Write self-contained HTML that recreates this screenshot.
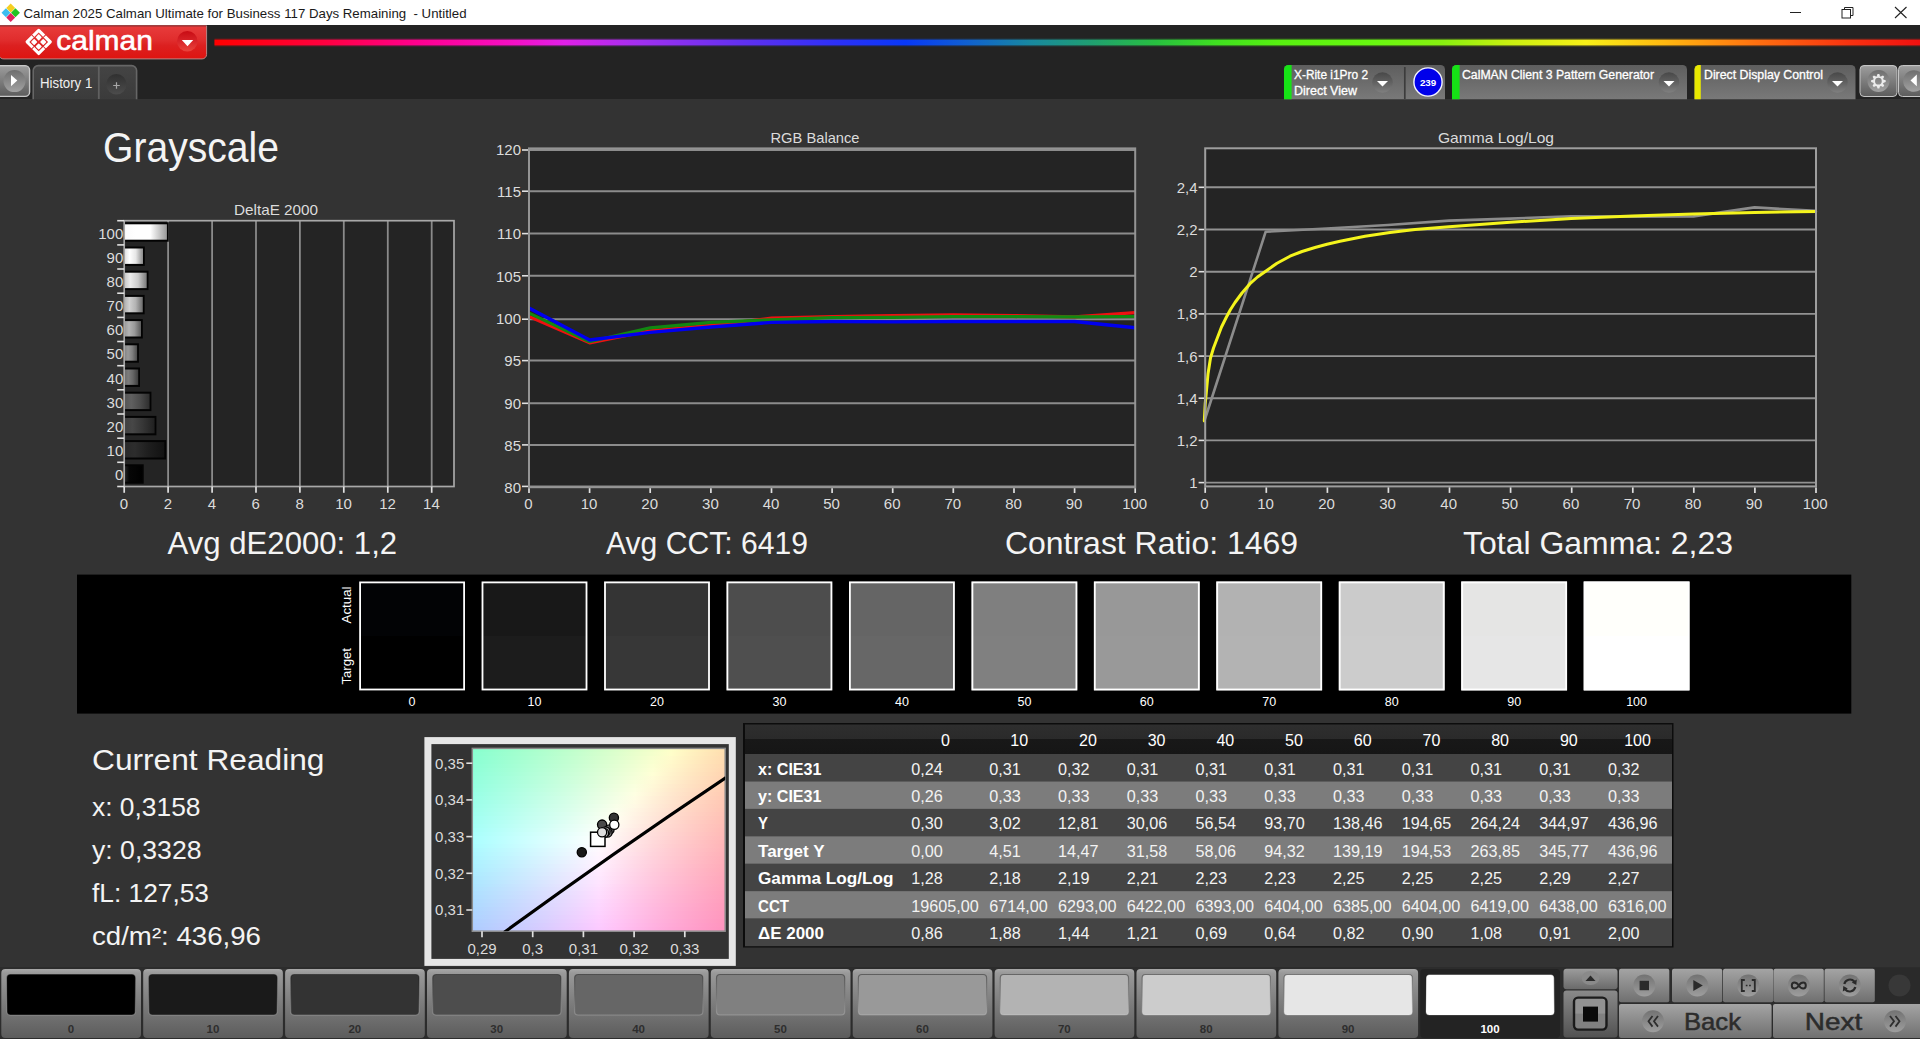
<!DOCTYPE html>
<html lang="en"><head><meta charset="utf-8"><title>Calman 2025 Calman Ultimate for Business - Untitled</title>
<style>
html,body{margin:0;padding:0;background:#333;overflow:hidden;}
body{width:1920px;height:1039px;font-family:"Liberation Sans",sans-serif;}
svg{display:block;font-family:"Liberation Sans",sans-serif;}
</style></head><body>
<svg width="1920" height="1039" viewBox="0 0 1920 1039">
<defs>
<linearGradient id="rainbow" x1="0" x2="1" y1="0" y2="0">
<stop offset="0" stop-color="#ff0000"/><stop offset="0.065" stop-color="#ff0040"/><stop offset="0.12" stop-color="#ff0090"/>
<stop offset="0.175" stop-color="#f410c4"/><stop offset="0.205" stop-color="#e020e8"/><stop offset="0.25" stop-color="#a030f0"/>
<stop offset="0.31" stop-color="#6030f0"/><stop offset="0.365" stop-color="#2c30f8"/><stop offset="0.405" stop-color="#0838f8"/>
<stop offset="0.441" stop-color="#1060d0"/><stop offset="0.478" stop-color="#1888a0"/><stop offset="0.515" stop-color="#20a070"/>
<stop offset="0.552" stop-color="#28c040"/><stop offset="0.588" stop-color="#40e020"/><stop offset="0.625" stop-color="#58f010"/>
<stop offset="0.68" stop-color="#68f810"/><stop offset="0.72" stop-color="#88f010"/><stop offset="0.758" stop-color="#c8f010"/>
<stop offset="0.804" stop-color="#f8f018"/><stop offset="0.85" stop-color="#ffb810"/><stop offset="0.904" stop-color="#ff7010"/>
<stop offset="0.96" stop-color="#f83010"/><stop offset="1" stop-color="#f01010"/>
</linearGradient>
<linearGradient id="redbtn" x1="0" x2="0" y1="0" y2="1">
<stop offset="0" stop-color="#e83c3c"/><stop offset="0.45" stop-color="#e02c2c"/><stop offset="0.6" stop-color="#dc2020"/><stop offset="1" stop-color="#de1410"/>
</linearGradient>
<linearGradient id="redcirc" x1="0" x2="0" y1="0" y2="1">
<stop offset="0" stop-color="#c80c14"/><stop offset="0.5" stop-color="#d82428"/><stop offset="1" stop-color="#ea443c"/>
</linearGradient>
<linearGradient id="panel" x1="0" x2="0" y1="0" y2="1">
<stop offset="0" stop-color="#5e5e5e"/><stop offset="1" stop-color="#797979"/>
</linearGradient>
<linearGradient id="tab" x1="0" x2="0" y1="0" y2="1">
<stop offset="0" stop-color="#444"/><stop offset="1" stop-color="#3b3b3b"/>
</linearGradient>
<linearGradient id="pluscirc" x1="0" x2="0" y1="0" y2="1"><stop offset="0" stop-color="#303030"/><stop offset="1" stop-color="#4c4c4c"/></linearGradient>
<linearGradient id="dcirc" x1="0" x2="0" y1="0" y2="1">
<stop offset="0" stop-color="#484848"/><stop offset="0.55" stop-color="#646464"/><stop offset="1" stop-color="#808080"/>
</linearGradient>
<linearGradient id="gbtn" x1="0" x2="0" y1="0" y2="1">
<stop offset="0" stop-color="#a8a8a8"/><stop offset="0.06" stop-color="#999"/><stop offset="1" stop-color="#5c5c5c"/>
</linearGradient>
<linearGradient id="gbtn2" x1="0" x2="0" y1="0" y2="1">
<stop offset="0" stop-color="#9c9c9c"/><stop offset="1" stop-color="#6a6a6a"/>
</linearGradient>
<linearGradient id="gbtn3" x1="0" x2="0" y1="0" y2="1">
<stop offset="0" stop-color="#a4a4a4"/><stop offset="1" stop-color="#707070"/>
</linearGradient>
<linearGradient id="gcirc" x1="0" x2="0" y1="0" y2="1">
<stop offset="0" stop-color="#6e6e6e"/><stop offset="1" stop-color="#a2a2a2"/>
</linearGradient>
<linearGradient id="sqbtn" x1="0" x2="0" y1="0" y2="1">
<stop offset="0" stop-color="#8a8a8a"/><stop offset="1" stop-color="#525252"/>
</linearGradient>
<linearGradient id="inset" x1="0" x2="0" y1="0" y2="1"><stop offset="0" stop-color="#000" stop-opacity="0.38"/><stop offset="0.5" stop-color="#444" stop-opacity="0.25"/><stop offset="1" stop-color="#fff" stop-opacity="0.22"/></linearGradient>
<linearGradient id="thead" x1="0" x2="0" y1="0" y2="1">
<stop offset="0" stop-color="#2e2e2e"/><stop offset="0.5" stop-color="#2a2a2a"/><stop offset="0.5" stop-color="#181818"/><stop offset="1" stop-color="#161616"/>
</linearGradient>
<linearGradient id="bar0" x1="0" x2="1" y1="0" y2="0"><stop offset="0" stop-color="#fbfbfb"/><stop offset="0.25" stop-color="#ffffff"/><stop offset="0.6" stop-color="#ffffff"/><stop offset="1" stop-color="#999999"/></linearGradient><linearGradient id="bar1" x1="0" x2="1" y1="0" y2="0"><stop offset="0" stop-color="#e3e3e3"/><stop offset="0.25" stop-color="#ffffff"/><stop offset="0.6" stop-color="#e6e6e6"/><stop offset="1" stop-color="#8a8a8a"/></linearGradient><linearGradient id="bar2" x1="0" x2="1" y1="0" y2="0"><stop offset="0" stop-color="#cbcbcb"/><stop offset="0.25" stop-color="#ececec"/><stop offset="0.6" stop-color="#cccccc"/><stop offset="1" stop-color="#7a7a7a"/></linearGradient><linearGradient id="bar3" x1="0" x2="1" y1="0" y2="0"><stop offset="0" stop-color="#b4b4b4"/><stop offset="0.25" stop-color="#d0d0d0"/><stop offset="0.6" stop-color="#b3b3b3"/><stop offset="1" stop-color="#6b6b6b"/></linearGradient><linearGradient id="bar4" x1="0" x2="1" y1="0" y2="0"><stop offset="0" stop-color="#9c9c9c"/><stop offset="0.25" stop-color="#b4b4b4"/><stop offset="0.6" stop-color="#999999"/><stop offset="1" stop-color="#5b5b5b"/></linearGradient><linearGradient id="bar5" x1="0" x2="1" y1="0" y2="0"><stop offset="0" stop-color="#858585"/><stop offset="0.25" stop-color="#989898"/><stop offset="0.6" stop-color="#808080"/><stop offset="1" stop-color="#4c4c4c"/></linearGradient><linearGradient id="bar6" x1="0" x2="1" y1="0" y2="0"><stop offset="0" stop-color="#6c6c6c"/><stop offset="0.25" stop-color="#7c7c7c"/><stop offset="0.6" stop-color="#666666"/><stop offset="1" stop-color="#3d3d3d"/></linearGradient><linearGradient id="bar7" x1="0" x2="1" y1="0" y2="0"><stop offset="0" stop-color="#555555"/><stop offset="0.25" stop-color="#606060"/><stop offset="0.6" stop-color="#4d4d4d"/><stop offset="1" stop-color="#2e2e2e"/></linearGradient><linearGradient id="bar8" x1="0" x2="1" y1="0" y2="0"><stop offset="0" stop-color="#404040"/><stop offset="0.25" stop-color="#474747"/><stop offset="0.6" stop-color="#363636"/><stop offset="1" stop-color="#202020"/></linearGradient><linearGradient id="bar9" x1="0" x2="1" y1="0" y2="0"><stop offset="0" stop-color="#292929"/><stop offset="0.25" stop-color="#2d2d2d"/><stop offset="0.6" stop-color="#1e1e1e"/><stop offset="1" stop-color="#121212"/></linearGradient><linearGradient id="bar10" x1="0" x2="1" y1="0" y2="0"><stop offset="0" stop-color="#222222"/><stop offset="0.25" stop-color="#060606"/><stop offset="0.6" stop-color="#040404"/><stop offset="1" stop-color="#000000"/></linearGradient><linearGradient id="c0" x1="0" x2="1" y1="0" y2="0"><stop offset="0.000" stop-color="#87ffce"/><stop offset="0.071" stop-color="#91ffce"/><stop offset="0.143" stop-color="#9bffce"/><stop offset="0.214" stop-color="#a5ffcd"/><stop offset="0.286" stop-color="#b0ffcd"/><stop offset="0.357" stop-color="#baffcc"/><stop offset="0.429" stop-color="#c5ffcc"/><stop offset="0.500" stop-color="#d0ffcb"/><stop offset="0.571" stop-color="#dbffcb"/><stop offset="0.643" stop-color="#e7ffca"/><stop offset="0.714" stop-color="#f2ffca"/><stop offset="0.786" stop-color="#feffc9"/><stop offset="0.857" stop-color="#fff4c0"/><stop offset="0.929" stop-color="#ffe9b7"/><stop offset="1.000" stop-color="#ffdfaf"/></linearGradient><linearGradient id="c1" x1="0" x2="1" y1="0" y2="0"><stop offset="0.000" stop-color="#89ffd0"/><stop offset="0.071" stop-color="#93ffd0"/><stop offset="0.143" stop-color="#9dffcf"/><stop offset="0.214" stop-color="#a7ffcf"/><stop offset="0.286" stop-color="#b1ffcf"/><stop offset="0.357" stop-color="#bcffce"/><stop offset="0.429" stop-color="#c7ffce"/><stop offset="0.500" stop-color="#d2ffcd"/><stop offset="0.571" stop-color="#ddffcd"/><stop offset="0.643" stop-color="#e9ffcc"/><stop offset="0.714" stop-color="#f4ffcc"/><stop offset="0.786" stop-color="#fffeca"/><stop offset="0.857" stop-color="#fff2c1"/><stop offset="0.929" stop-color="#ffe7b8"/><stop offset="1.000" stop-color="#ffddaf"/></linearGradient><linearGradient id="c2" x1="0" x2="1" y1="0" y2="0"><stop offset="0.000" stop-color="#8affd2"/><stop offset="0.071" stop-color="#94ffd2"/><stop offset="0.143" stop-color="#9effd1"/><stop offset="0.214" stop-color="#a8ffd1"/><stop offset="0.286" stop-color="#b3ffd1"/><stop offset="0.357" stop-color="#beffd0"/><stop offset="0.429" stop-color="#c9ffd0"/><stop offset="0.500" stop-color="#d4ffcf"/><stop offset="0.571" stop-color="#dfffcf"/><stop offset="0.643" stop-color="#ebffce"/><stop offset="0.714" stop-color="#f7ffce"/><stop offset="0.786" stop-color="#fffbcb"/><stop offset="0.857" stop-color="#fff0c1"/><stop offset="0.929" stop-color="#ffe5b8"/><stop offset="1.000" stop-color="#ffdbb0"/></linearGradient><linearGradient id="c3" x1="0" x2="1" y1="0" y2="0"><stop offset="0.000" stop-color="#8bffd4"/><stop offset="0.071" stop-color="#95ffd4"/><stop offset="0.143" stop-color="#a0ffd3"/><stop offset="0.214" stop-color="#aaffd3"/><stop offset="0.286" stop-color="#b5ffd3"/><stop offset="0.357" stop-color="#bfffd2"/><stop offset="0.429" stop-color="#caffd2"/><stop offset="0.500" stop-color="#d6ffd1"/><stop offset="0.571" stop-color="#e1ffd1"/><stop offset="0.643" stop-color="#edffd1"/><stop offset="0.714" stop-color="#f9ffd0"/><stop offset="0.786" stop-color="#fff9cb"/><stop offset="0.857" stop-color="#ffeec1"/><stop offset="0.929" stop-color="#ffe3b8"/><stop offset="1.000" stop-color="#ffdab0"/></linearGradient><linearGradient id="c4" x1="0" x2="1" y1="0" y2="0"><stop offset="0.000" stop-color="#8dffd6"/><stop offset="0.071" stop-color="#97ffd6"/><stop offset="0.143" stop-color="#a1ffd5"/><stop offset="0.214" stop-color="#acffd5"/><stop offset="0.286" stop-color="#b6ffd5"/><stop offset="0.357" stop-color="#c1ffd4"/><stop offset="0.429" stop-color="#ccffd4"/><stop offset="0.500" stop-color="#d8ffd3"/><stop offset="0.571" stop-color="#e3ffd3"/><stop offset="0.643" stop-color="#efffd3"/><stop offset="0.714" stop-color="#fbffd2"/><stop offset="0.786" stop-color="#fff7cb"/><stop offset="0.857" stop-color="#ffecc2"/><stop offset="0.929" stop-color="#ffe1b9"/><stop offset="1.000" stop-color="#ffd8b0"/></linearGradient><linearGradient id="c5" x1="0" x2="1" y1="0" y2="0"><stop offset="0.000" stop-color="#8effd8"/><stop offset="0.071" stop-color="#99ffd8"/><stop offset="0.143" stop-color="#a3ffd7"/><stop offset="0.214" stop-color="#adffd7"/><stop offset="0.286" stop-color="#b8ffd7"/><stop offset="0.357" stop-color="#c3ffd6"/><stop offset="0.429" stop-color="#ceffd6"/><stop offset="0.500" stop-color="#daffd6"/><stop offset="0.571" stop-color="#e5ffd5"/><stop offset="0.643" stop-color="#f1ffd5"/><stop offset="0.714" stop-color="#fdffd4"/><stop offset="0.786" stop-color="#fff5cc"/><stop offset="0.857" stop-color="#ffeac2"/><stop offset="0.929" stop-color="#ffe0b9"/><stop offset="1.000" stop-color="#ffd6b1"/></linearGradient><linearGradient id="c6" x1="0" x2="1" y1="0" y2="0"><stop offset="0.000" stop-color="#90ffda"/><stop offset="0.071" stop-color="#9affda"/><stop offset="0.143" stop-color="#a4ffd9"/><stop offset="0.214" stop-color="#afffd9"/><stop offset="0.286" stop-color="#baffd9"/><stop offset="0.357" stop-color="#c5ffd8"/><stop offset="0.429" stop-color="#d0ffd8"/><stop offset="0.500" stop-color="#dcffd8"/><stop offset="0.571" stop-color="#e7ffd7"/><stop offset="0.643" stop-color="#f3ffd7"/><stop offset="0.714" stop-color="#ffffd6"/><stop offset="0.786" stop-color="#fff3cc"/><stop offset="0.857" stop-color="#ffe8c2"/><stop offset="0.929" stop-color="#ffdeb9"/><stop offset="1.000" stop-color="#ffd4b1"/></linearGradient><linearGradient id="c7" x1="0" x2="1" y1="0" y2="0"><stop offset="0.000" stop-color="#91ffdc"/><stop offset="0.071" stop-color="#9cffdc"/><stop offset="0.143" stop-color="#a6ffdc"/><stop offset="0.214" stop-color="#b1ffdb"/><stop offset="0.286" stop-color="#bcffdb"/><stop offset="0.357" stop-color="#c7ffdb"/><stop offset="0.429" stop-color="#d2ffda"/><stop offset="0.500" stop-color="#deffda"/><stop offset="0.571" stop-color="#e9ffda"/><stop offset="0.643" stop-color="#f5ffd9"/><stop offset="0.714" stop-color="#fffcd7"/><stop offset="0.786" stop-color="#fff1cc"/><stop offset="0.857" stop-color="#ffe6c3"/><stop offset="0.929" stop-color="#ffdcba"/><stop offset="1.000" stop-color="#ffd2b1"/></linearGradient><linearGradient id="c8" x1="0" x2="1" y1="0" y2="0"><stop offset="0.000" stop-color="#93ffde"/><stop offset="0.071" stop-color="#9dffde"/><stop offset="0.143" stop-color="#a8ffde"/><stop offset="0.214" stop-color="#b2ffdd"/><stop offset="0.286" stop-color="#bdffdd"/><stop offset="0.357" stop-color="#c9ffdd"/><stop offset="0.429" stop-color="#d4ffdc"/><stop offset="0.500" stop-color="#e0ffdc"/><stop offset="0.571" stop-color="#ecffdc"/><stop offset="0.643" stop-color="#f8ffdb"/><stop offset="0.714" stop-color="#fffad7"/><stop offset="0.786" stop-color="#ffefcd"/><stop offset="0.857" stop-color="#ffe4c3"/><stop offset="0.929" stop-color="#ffdaba"/><stop offset="1.000" stop-color="#ffd0b2"/></linearGradient><linearGradient id="c9" x1="0" x2="1" y1="0" y2="0"><stop offset="0.000" stop-color="#94ffe0"/><stop offset="0.071" stop-color="#9fffe0"/><stop offset="0.143" stop-color="#a9ffe0"/><stop offset="0.214" stop-color="#b4ffdf"/><stop offset="0.286" stop-color="#bfffdf"/><stop offset="0.357" stop-color="#caffdf"/><stop offset="0.429" stop-color="#d6ffdf"/><stop offset="0.500" stop-color="#e2ffde"/><stop offset="0.571" stop-color="#eeffde"/><stop offset="0.643" stop-color="#faffde"/><stop offset="0.714" stop-color="#fff8d7"/><stop offset="0.786" stop-color="#ffeccd"/><stop offset="0.857" stop-color="#ffe2c3"/><stop offset="0.929" stop-color="#ffd8ba"/><stop offset="1.000" stop-color="#ffcfb2"/></linearGradient><linearGradient id="c10" x1="0" x2="1" y1="0" y2="0"><stop offset="0.000" stop-color="#96ffe2"/><stop offset="0.071" stop-color="#a0ffe2"/><stop offset="0.143" stop-color="#abffe2"/><stop offset="0.214" stop-color="#b6ffe2"/><stop offset="0.286" stop-color="#c1ffe1"/><stop offset="0.357" stop-color="#ccffe1"/><stop offset="0.429" stop-color="#d8ffe1"/><stop offset="0.500" stop-color="#e4ffe1"/><stop offset="0.571" stop-color="#f0ffe0"/><stop offset="0.643" stop-color="#fcffe0"/><stop offset="0.714" stop-color="#fff6d7"/><stop offset="0.786" stop-color="#ffeacd"/><stop offset="0.857" stop-color="#ffe0c4"/><stop offset="0.929" stop-color="#ffd6bb"/><stop offset="1.000" stop-color="#ffcdb3"/></linearGradient><linearGradient id="c11" x1="0" x2="1" y1="0" y2="0"><stop offset="0.000" stop-color="#97ffe5"/><stop offset="0.071" stop-color="#a2ffe4"/><stop offset="0.143" stop-color="#adffe4"/><stop offset="0.214" stop-color="#b8ffe4"/><stop offset="0.286" stop-color="#c3ffe4"/><stop offset="0.357" stop-color="#ceffe3"/><stop offset="0.429" stop-color="#daffe3"/><stop offset="0.500" stop-color="#e6ffe3"/><stop offset="0.571" stop-color="#f2ffe3"/><stop offset="0.643" stop-color="#feffe2"/><stop offset="0.714" stop-color="#fff4d8"/><stop offset="0.786" stop-color="#ffe8ce"/><stop offset="0.857" stop-color="#ffdec4"/><stop offset="0.929" stop-color="#ffd4bb"/><stop offset="1.000" stop-color="#ffcbb3"/></linearGradient><linearGradient id="c12" x1="0" x2="1" y1="0" y2="0"><stop offset="0.000" stop-color="#99ffe7"/><stop offset="0.071" stop-color="#a4ffe6"/><stop offset="0.143" stop-color="#aeffe6"/><stop offset="0.214" stop-color="#baffe6"/><stop offset="0.286" stop-color="#c5ffe6"/><stop offset="0.357" stop-color="#d0ffe6"/><stop offset="0.429" stop-color="#dcffe5"/><stop offset="0.500" stop-color="#e8ffe5"/><stop offset="0.571" stop-color="#f4ffe5"/><stop offset="0.643" stop-color="#fffde3"/><stop offset="0.714" stop-color="#fff1d8"/><stop offset="0.786" stop-color="#ffe6ce"/><stop offset="0.857" stop-color="#ffdcc4"/><stop offset="0.929" stop-color="#ffd2bc"/><stop offset="1.000" stop-color="#ffc9b3"/></linearGradient><linearGradient id="c13" x1="0" x2="1" y1="0" y2="0"><stop offset="0.000" stop-color="#9bffe9"/><stop offset="0.071" stop-color="#a5ffe9"/><stop offset="0.143" stop-color="#b0ffe8"/><stop offset="0.214" stop-color="#bbffe8"/><stop offset="0.286" stop-color="#c7ffe8"/><stop offset="0.357" stop-color="#d2ffe8"/><stop offset="0.429" stop-color="#deffe8"/><stop offset="0.500" stop-color="#eaffe7"/><stop offset="0.571" stop-color="#f6ffe7"/><stop offset="0.643" stop-color="#fffbe3"/><stop offset="0.714" stop-color="#ffefd8"/><stop offset="0.786" stop-color="#ffe4ce"/><stop offset="0.857" stop-color="#ffdac5"/><stop offset="0.929" stop-color="#ffd0bc"/><stop offset="1.000" stop-color="#ffc7b4"/></linearGradient><linearGradient id="c14" x1="0" x2="1" y1="0" y2="0"><stop offset="0.000" stop-color="#9cffeb"/><stop offset="0.071" stop-color="#a7ffeb"/><stop offset="0.143" stop-color="#b2ffeb"/><stop offset="0.214" stop-color="#bdffea"/><stop offset="0.286" stop-color="#c9ffea"/><stop offset="0.357" stop-color="#d4ffea"/><stop offset="0.429" stop-color="#e0ffea"/><stop offset="0.500" stop-color="#ecffea"/><stop offset="0.571" stop-color="#f9ffe9"/><stop offset="0.643" stop-color="#fff9e4"/><stop offset="0.714" stop-color="#ffedd9"/><stop offset="0.786" stop-color="#ffe2ce"/><stop offset="0.857" stop-color="#ffd8c5"/><stop offset="0.929" stop-color="#ffcebc"/><stop offset="1.000" stop-color="#ffc6b4"/></linearGradient><linearGradient id="c15" x1="0" x2="1" y1="0" y2="0"><stop offset="0.000" stop-color="#9effed"/><stop offset="0.071" stop-color="#a9ffed"/><stop offset="0.143" stop-color="#b4ffed"/><stop offset="0.214" stop-color="#bfffed"/><stop offset="0.286" stop-color="#cbffed"/><stop offset="0.357" stop-color="#d6ffec"/><stop offset="0.429" stop-color="#e2ffec"/><stop offset="0.500" stop-color="#efffec"/><stop offset="0.571" stop-color="#fbffec"/><stop offset="0.643" stop-color="#fff6e4"/><stop offset="0.714" stop-color="#ffebd9"/><stop offset="0.786" stop-color="#ffe0cf"/><stop offset="0.857" stop-color="#ffd6c5"/><stop offset="0.929" stop-color="#ffcdbd"/><stop offset="1.000" stop-color="#ffc4b4"/></linearGradient><linearGradient id="c16" x1="0" x2="1" y1="0" y2="0"><stop offset="0.000" stop-color="#9fffef"/><stop offset="0.071" stop-color="#aaffef"/><stop offset="0.143" stop-color="#b5ffef"/><stop offset="0.214" stop-color="#c1ffef"/><stop offset="0.286" stop-color="#ccffef"/><stop offset="0.357" stop-color="#d8ffef"/><stop offset="0.429" stop-color="#e4ffef"/><stop offset="0.500" stop-color="#f1ffee"/><stop offset="0.571" stop-color="#fdffee"/><stop offset="0.643" stop-color="#fff4e4"/><stop offset="0.714" stop-color="#ffe9d9"/><stop offset="0.786" stop-color="#ffdecf"/><stop offset="0.857" stop-color="#ffd4c6"/><stop offset="0.929" stop-color="#ffcbbd"/><stop offset="1.000" stop-color="#ffc2b5"/></linearGradient><linearGradient id="c17" x1="0" x2="1" y1="0" y2="0"><stop offset="0.000" stop-color="#a1fff2"/><stop offset="0.071" stop-color="#acfff2"/><stop offset="0.143" stop-color="#b7fff1"/><stop offset="0.214" stop-color="#c3fff1"/><stop offset="0.286" stop-color="#cefff1"/><stop offset="0.357" stop-color="#dafff1"/><stop offset="0.429" stop-color="#e7fff1"/><stop offset="0.500" stop-color="#f3fff1"/><stop offset="0.571" stop-color="#fffef0"/><stop offset="0.643" stop-color="#fff2e4"/><stop offset="0.714" stop-color="#ffe7da"/><stop offset="0.786" stop-color="#ffdccf"/><stop offset="0.857" stop-color="#ffd2c6"/><stop offset="0.929" stop-color="#ffc9bd"/><stop offset="1.000" stop-color="#ffc0b5"/></linearGradient><linearGradient id="c18" x1="0" x2="1" y1="0" y2="0"><stop offset="0.000" stop-color="#a3fff4"/><stop offset="0.071" stop-color="#aefff4"/><stop offset="0.143" stop-color="#b9fff4"/><stop offset="0.214" stop-color="#c5fff4"/><stop offset="0.286" stop-color="#d0fff4"/><stop offset="0.357" stop-color="#dcfff4"/><stop offset="0.429" stop-color="#e9fff3"/><stop offset="0.500" stop-color="#f5fff3"/><stop offset="0.571" stop-color="#fffcf0"/><stop offset="0.643" stop-color="#fff0e5"/><stop offset="0.714" stop-color="#ffe5da"/><stop offset="0.786" stop-color="#ffdad0"/><stop offset="0.857" stop-color="#ffd0c6"/><stop offset="0.929" stop-color="#ffc7be"/><stop offset="1.000" stop-color="#ffbfb5"/></linearGradient><linearGradient id="c19" x1="0" x2="1" y1="0" y2="0"><stop offset="0.000" stop-color="#a4fff6"/><stop offset="0.071" stop-color="#b0fff6"/><stop offset="0.143" stop-color="#bbfff6"/><stop offset="0.214" stop-color="#c7fff6"/><stop offset="0.286" stop-color="#d2fff6"/><stop offset="0.357" stop-color="#dffff6"/><stop offset="0.429" stop-color="#ebfff6"/><stop offset="0.500" stop-color="#f8fff6"/><stop offset="0.571" stop-color="#fffaf1"/><stop offset="0.643" stop-color="#ffeee5"/><stop offset="0.714" stop-color="#ffe2da"/><stop offset="0.786" stop-color="#ffd8d0"/><stop offset="0.857" stop-color="#ffcec7"/><stop offset="0.929" stop-color="#ffc5be"/><stop offset="1.000" stop-color="#ffbdb6"/></linearGradient><linearGradient id="c20" x1="0" x2="1" y1="0" y2="0"><stop offset="0.000" stop-color="#a6fff9"/><stop offset="0.071" stop-color="#b1fff9"/><stop offset="0.143" stop-color="#bdfff9"/><stop offset="0.214" stop-color="#c9fff8"/><stop offset="0.286" stop-color="#d5fff8"/><stop offset="0.357" stop-color="#e1fff8"/><stop offset="0.429" stop-color="#edfff8"/><stop offset="0.500" stop-color="#fafff8"/><stop offset="0.571" stop-color="#fff7f1"/><stop offset="0.643" stop-color="#ffebe5"/><stop offset="0.714" stop-color="#ffe0da"/><stop offset="0.786" stop-color="#ffd6d0"/><stop offset="0.857" stop-color="#ffcdc7"/><stop offset="0.929" stop-color="#ffc4be"/><stop offset="1.000" stop-color="#ffbbb6"/></linearGradient><linearGradient id="c21" x1="0" x2="1" y1="0" y2="0"><stop offset="0.000" stop-color="#a8fffb"/><stop offset="0.071" stop-color="#b3fffb"/><stop offset="0.143" stop-color="#bffffb"/><stop offset="0.214" stop-color="#cbfffb"/><stop offset="0.286" stop-color="#d7fffb"/><stop offset="0.357" stop-color="#e3fffb"/><stop offset="0.429" stop-color="#effffb"/><stop offset="0.500" stop-color="#fcfffb"/><stop offset="0.571" stop-color="#fff5f1"/><stop offset="0.643" stop-color="#ffe9e5"/><stop offset="0.714" stop-color="#ffdedb"/><stop offset="0.786" stop-color="#ffd4d1"/><stop offset="0.857" stop-color="#ffcbc7"/><stop offset="0.929" stop-color="#ffc2bf"/><stop offset="1.000" stop-color="#ffbab6"/></linearGradient><linearGradient id="c22" x1="0" x2="1" y1="0" y2="0"><stop offset="0.000" stop-color="#aafffd"/><stop offset="0.071" stop-color="#b5fffd"/><stop offset="0.143" stop-color="#c1fffd"/><stop offset="0.214" stop-color="#cdfffd"/><stop offset="0.286" stop-color="#d9fffd"/><stop offset="0.357" stop-color="#e5fffd"/><stop offset="0.429" stop-color="#f2fffd"/><stop offset="0.500" stop-color="#fffffd"/><stop offset="0.571" stop-color="#fff3f1"/><stop offset="0.643" stop-color="#ffe7e6"/><stop offset="0.714" stop-color="#ffdcdb"/><stop offset="0.786" stop-color="#ffd2d1"/><stop offset="0.857" stop-color="#ffc9c8"/><stop offset="0.929" stop-color="#ffc0bf"/><stop offset="1.000" stop-color="#ffb8b7"/></linearGradient><linearGradient id="c23" x1="0" x2="1" y1="0" y2="0"><stop offset="0.000" stop-color="#abfeff"/><stop offset="0.071" stop-color="#b6feff"/><stop offset="0.143" stop-color="#c2feff"/><stop offset="0.214" stop-color="#cefeff"/><stop offset="0.286" stop-color="#dafeff"/><stop offset="0.357" stop-color="#e6feff"/><stop offset="0.429" stop-color="#f3feff"/><stop offset="0.500" stop-color="#fffdfe"/><stop offset="0.571" stop-color="#fff0f1"/><stop offset="0.643" stop-color="#ffe5e6"/><stop offset="0.714" stop-color="#ffdadb"/><stop offset="0.786" stop-color="#ffd0d1"/><stop offset="0.857" stop-color="#ffc7c8"/><stop offset="0.929" stop-color="#ffbebf"/><stop offset="1.000" stop-color="#ffb6b7"/></linearGradient><linearGradient id="c24" x1="0" x2="1" y1="0" y2="0"><stop offset="0.000" stop-color="#abfcff"/><stop offset="0.071" stop-color="#b6fcff"/><stop offset="0.143" stop-color="#c2fcff"/><stop offset="0.214" stop-color="#cefcff"/><stop offset="0.286" stop-color="#dafcff"/><stop offset="0.357" stop-color="#e6fcff"/><stop offset="0.429" stop-color="#f3fbff"/><stop offset="0.500" stop-color="#fffbfe"/><stop offset="0.571" stop-color="#ffeef2"/><stop offset="0.643" stop-color="#ffe3e6"/><stop offset="0.714" stop-color="#ffd8db"/><stop offset="0.786" stop-color="#ffced1"/><stop offset="0.857" stop-color="#ffc5c8"/><stop offset="0.929" stop-color="#ffbdc0"/><stop offset="1.000" stop-color="#ffb4b7"/></linearGradient><linearGradient id="c25" x1="0" x2="1" y1="0" y2="0"><stop offset="0.000" stop-color="#abf9ff"/><stop offset="0.071" stop-color="#b7f9ff"/><stop offset="0.143" stop-color="#c2f9ff"/><stop offset="0.214" stop-color="#cef9ff"/><stop offset="0.286" stop-color="#daf9ff"/><stop offset="0.357" stop-color="#e6f9ff"/><stop offset="0.429" stop-color="#f3f9ff"/><stop offset="0.500" stop-color="#fff8fe"/><stop offset="0.571" stop-color="#ffecf2"/><stop offset="0.643" stop-color="#ffe1e6"/><stop offset="0.714" stop-color="#ffd6dc"/><stop offset="0.786" stop-color="#ffccd2"/><stop offset="0.857" stop-color="#ffc3c9"/><stop offset="0.929" stop-color="#ffbbc0"/><stop offset="1.000" stop-color="#ffb3b8"/></linearGradient><linearGradient id="c26" x1="0" x2="1" y1="0" y2="0"><stop offset="0.000" stop-color="#abf7ff"/><stop offset="0.071" stop-color="#b7f7ff"/><stop offset="0.143" stop-color="#c2f7ff"/><stop offset="0.214" stop-color="#cef7ff"/><stop offset="0.286" stop-color="#daf7ff"/><stop offset="0.357" stop-color="#e6f7ff"/><stop offset="0.429" stop-color="#f3f6ff"/><stop offset="0.500" stop-color="#fff6fe"/><stop offset="0.571" stop-color="#ffeaf2"/><stop offset="0.643" stop-color="#ffdfe7"/><stop offset="0.714" stop-color="#ffd4dc"/><stop offset="0.786" stop-color="#ffcbd2"/><stop offset="0.857" stop-color="#ffc2c9"/><stop offset="0.929" stop-color="#ffb9c0"/><stop offset="1.000" stop-color="#ffb1b8"/></linearGradient><linearGradient id="c27" x1="0" x2="1" y1="0" y2="0"><stop offset="0.000" stop-color="#abf5ff"/><stop offset="0.071" stop-color="#b7f5ff"/><stop offset="0.143" stop-color="#c2f4ff"/><stop offset="0.214" stop-color="#cef4ff"/><stop offset="0.286" stop-color="#daf4ff"/><stop offset="0.357" stop-color="#e6f4ff"/><stop offset="0.429" stop-color="#f3f4ff"/><stop offset="0.500" stop-color="#fff4ff"/><stop offset="0.571" stop-color="#ffe8f2"/><stop offset="0.643" stop-color="#ffdce7"/><stop offset="0.714" stop-color="#ffd2dc"/><stop offset="0.786" stop-color="#ffc9d2"/><stop offset="0.857" stop-color="#ffc0c9"/><stop offset="0.929" stop-color="#ffb7c0"/><stop offset="1.000" stop-color="#ffafb8"/></linearGradient><linearGradient id="c28" x1="0" x2="1" y1="0" y2="0"><stop offset="0.000" stop-color="#acf2ff"/><stop offset="0.071" stop-color="#b7f2ff"/><stop offset="0.143" stop-color="#c2f2ff"/><stop offset="0.214" stop-color="#cef2ff"/><stop offset="0.286" stop-color="#daf2ff"/><stop offset="0.357" stop-color="#e6f2ff"/><stop offset="0.429" stop-color="#f2f1ff"/><stop offset="0.500" stop-color="#fff1ff"/><stop offset="0.571" stop-color="#ffe5f3"/><stop offset="0.643" stop-color="#ffdae7"/><stop offset="0.714" stop-color="#ffd0dd"/><stop offset="0.786" stop-color="#ffc7d3"/><stop offset="0.857" stop-color="#ffbec9"/><stop offset="0.929" stop-color="#ffb6c1"/><stop offset="1.000" stop-color="#ffaeb9"/></linearGradient><linearGradient id="c29" x1="0" x2="1" y1="0" y2="0"><stop offset="0.000" stop-color="#acf0ff"/><stop offset="0.071" stop-color="#b7f0ff"/><stop offset="0.143" stop-color="#c2f0ff"/><stop offset="0.214" stop-color="#cef0ff"/><stop offset="0.286" stop-color="#daefff"/><stop offset="0.357" stop-color="#e6efff"/><stop offset="0.429" stop-color="#f2efff"/><stop offset="0.500" stop-color="#ffefff"/><stop offset="0.571" stop-color="#ffe3f3"/><stop offset="0.643" stop-color="#ffd8e7"/><stop offset="0.714" stop-color="#ffcedd"/><stop offset="0.786" stop-color="#ffc5d3"/><stop offset="0.857" stop-color="#ffbcca"/><stop offset="0.929" stop-color="#ffb4c1"/><stop offset="1.000" stop-color="#ffacb9"/></linearGradient><linearGradient id="c30" x1="0" x2="1" y1="0" y2="0"><stop offset="0.000" stop-color="#aceeff"/><stop offset="0.071" stop-color="#b7eeff"/><stop offset="0.143" stop-color="#c2edff"/><stop offset="0.214" stop-color="#ceedff"/><stop offset="0.286" stop-color="#daedff"/><stop offset="0.357" stop-color="#e6edff"/><stop offset="0.429" stop-color="#f2edff"/><stop offset="0.500" stop-color="#ffecff"/><stop offset="0.571" stop-color="#ffe1f3"/><stop offset="0.643" stop-color="#ffd6e8"/><stop offset="0.714" stop-color="#ffccdd"/><stop offset="0.786" stop-color="#ffc3d3"/><stop offset="0.857" stop-color="#ffbaca"/><stop offset="0.929" stop-color="#ffb2c1"/><stop offset="1.000" stop-color="#ffabb9"/></linearGradient><linearGradient id="c31" x1="0" x2="1" y1="0" y2="0"><stop offset="0.000" stop-color="#acecff"/><stop offset="0.071" stop-color="#b7ebff"/><stop offset="0.143" stop-color="#c2ebff"/><stop offset="0.214" stop-color="#ceebff"/><stop offset="0.286" stop-color="#daebff"/><stop offset="0.357" stop-color="#e6eaff"/><stop offset="0.429" stop-color="#f2eaff"/><stop offset="0.500" stop-color="#ffeaff"/><stop offset="0.571" stop-color="#ffdff3"/><stop offset="0.643" stop-color="#ffd4e8"/><stop offset="0.714" stop-color="#ffcadd"/><stop offset="0.786" stop-color="#ffc1d4"/><stop offset="0.857" stop-color="#ffb9ca"/><stop offset="0.929" stop-color="#ffb1c2"/><stop offset="1.000" stop-color="#ffa9ba"/></linearGradient><linearGradient id="c32" x1="0" x2="1" y1="0" y2="0"><stop offset="0.000" stop-color="#ace9ff"/><stop offset="0.071" stop-color="#b7e9ff"/><stop offset="0.143" stop-color="#c3e9ff"/><stop offset="0.214" stop-color="#cee9ff"/><stop offset="0.286" stop-color="#dae8ff"/><stop offset="0.357" stop-color="#e6e8ff"/><stop offset="0.429" stop-color="#f2e8ff"/><stop offset="0.500" stop-color="#fee8ff"/><stop offset="0.571" stop-color="#ffddf3"/><stop offset="0.643" stop-color="#ffd2e8"/><stop offset="0.714" stop-color="#ffc8de"/><stop offset="0.786" stop-color="#ffbfd4"/><stop offset="0.857" stop-color="#ffb7cb"/><stop offset="0.929" stop-color="#ffafc2"/><stop offset="1.000" stop-color="#ffa7ba"/></linearGradient><linearGradient id="c33" x1="0" x2="1" y1="0" y2="0"><stop offset="0.000" stop-color="#ace7ff"/><stop offset="0.071" stop-color="#b7e7ff"/><stop offset="0.143" stop-color="#c3e7ff"/><stop offset="0.214" stop-color="#cee6ff"/><stop offset="0.286" stop-color="#dae6ff"/><stop offset="0.357" stop-color="#e6e6ff"/><stop offset="0.429" stop-color="#f2e5ff"/><stop offset="0.500" stop-color="#fee5ff"/><stop offset="0.571" stop-color="#ffdbf4"/><stop offset="0.643" stop-color="#ffd0e8"/><stop offset="0.714" stop-color="#ffc7de"/><stop offset="0.786" stop-color="#ffbed4"/><stop offset="0.857" stop-color="#ffb5cb"/><stop offset="0.929" stop-color="#ffadc2"/><stop offset="1.000" stop-color="#ffa6ba"/></linearGradient><linearGradient id="c34" x1="0" x2="1" y1="0" y2="0"><stop offset="0.000" stop-color="#ace5ff"/><stop offset="0.071" stop-color="#b7e5ff"/><stop offset="0.143" stop-color="#c3e4ff"/><stop offset="0.214" stop-color="#cee4ff"/><stop offset="0.286" stop-color="#dae4ff"/><stop offset="0.357" stop-color="#e6e3ff"/><stop offset="0.429" stop-color="#f2e3ff"/><stop offset="0.500" stop-color="#fee3ff"/><stop offset="0.571" stop-color="#ffd8f4"/><stop offset="0.643" stop-color="#ffcee9"/><stop offset="0.714" stop-color="#ffc5de"/><stop offset="0.786" stop-color="#ffbcd4"/><stop offset="0.857" stop-color="#ffb3cb"/><stop offset="0.929" stop-color="#ffacc3"/><stop offset="1.000" stop-color="#ffa4bb"/></linearGradient><linearGradient id="c35" x1="0" x2="1" y1="0" y2="0"><stop offset="0.000" stop-color="#ade3ff"/><stop offset="0.071" stop-color="#b8e2ff"/><stop offset="0.143" stop-color="#c3e2ff"/><stop offset="0.214" stop-color="#cee2ff"/><stop offset="0.286" stop-color="#dae1ff"/><stop offset="0.357" stop-color="#e5e1ff"/><stop offset="0.429" stop-color="#f2e1ff"/><stop offset="0.500" stop-color="#fee0ff"/><stop offset="0.571" stop-color="#ffd6f4"/><stop offset="0.643" stop-color="#ffcce9"/><stop offset="0.714" stop-color="#ffc3de"/><stop offset="0.786" stop-color="#ffbad5"/><stop offset="0.857" stop-color="#ffb2cc"/><stop offset="0.929" stop-color="#ffaac3"/><stop offset="1.000" stop-color="#ffa3bb"/></linearGradient><linearGradient id="c36" x1="0" x2="1" y1="0" y2="0"><stop offset="0.000" stop-color="#ade0ff"/><stop offset="0.071" stop-color="#b8e0ff"/><stop offset="0.143" stop-color="#c3e0ff"/><stop offset="0.214" stop-color="#cedfff"/><stop offset="0.286" stop-color="#dadfff"/><stop offset="0.357" stop-color="#e5dfff"/><stop offset="0.429" stop-color="#f1deff"/><stop offset="0.500" stop-color="#fedeff"/><stop offset="0.571" stop-color="#ffd4f4"/><stop offset="0.643" stop-color="#ffcae9"/><stop offset="0.714" stop-color="#ffc1df"/><stop offset="0.786" stop-color="#ffb8d5"/><stop offset="0.857" stop-color="#ffb0cc"/><stop offset="0.929" stop-color="#ffa8c3"/><stop offset="1.000" stop-color="#ffa1bb"/></linearGradient><linearGradient id="c37" x1="0" x2="1" y1="0" y2="0"><stop offset="0.000" stop-color="#addeff"/><stop offset="0.071" stop-color="#b8deff"/><stop offset="0.143" stop-color="#c3deff"/><stop offset="0.214" stop-color="#ceddff"/><stop offset="0.286" stop-color="#daddff"/><stop offset="0.357" stop-color="#e5dcff"/><stop offset="0.429" stop-color="#f1dcff"/><stop offset="0.500" stop-color="#fedcff"/><stop offset="0.571" stop-color="#ffd2f4"/><stop offset="0.643" stop-color="#ffc8e9"/><stop offset="0.714" stop-color="#ffbfdf"/><stop offset="0.786" stop-color="#ffb6d5"/><stop offset="0.857" stop-color="#ffaecc"/><stop offset="0.929" stop-color="#ffa7c4"/><stop offset="1.000" stop-color="#ff9fbc"/></linearGradient><linearGradient id="c38" x1="0" x2="1" y1="0" y2="0"><stop offset="0.000" stop-color="#addcff"/><stop offset="0.071" stop-color="#b8dcff"/><stop offset="0.143" stop-color="#c3dbff"/><stop offset="0.214" stop-color="#cedbff"/><stop offset="0.286" stop-color="#dadbff"/><stop offset="0.357" stop-color="#e5daff"/><stop offset="0.429" stop-color="#f1daff"/><stop offset="0.500" stop-color="#fdd9ff"/><stop offset="0.571" stop-color="#ffd0f5"/><stop offset="0.643" stop-color="#ffc6e9"/><stop offset="0.714" stop-color="#ffbddf"/><stop offset="0.786" stop-color="#ffb5d5"/><stop offset="0.857" stop-color="#ffadcc"/><stop offset="0.929" stop-color="#ffa5c4"/><stop offset="1.000" stop-color="#ff9ebc"/></linearGradient><linearGradient id="c39" x1="0" x2="1" y1="0" y2="0"><stop offset="0.000" stop-color="#addaff"/><stop offset="0.071" stop-color="#b8daff"/><stop offset="0.143" stop-color="#c3d9ff"/><stop offset="0.214" stop-color="#ced9ff"/><stop offset="0.286" stop-color="#dad8ff"/><stop offset="0.357" stop-color="#e5d8ff"/><stop offset="0.429" stop-color="#f1d8ff"/><stop offset="0.500" stop-color="#fdd7ff"/><stop offset="0.571" stop-color="#ffcef5"/><stop offset="0.643" stop-color="#ffc4ea"/><stop offset="0.714" stop-color="#ffbbdf"/><stop offset="0.786" stop-color="#ffb3d6"/><stop offset="0.857" stop-color="#ffabcd"/><stop offset="0.929" stop-color="#ffa3c4"/><stop offset="1.000" stop-color="#ff9cbc"/></linearGradient><linearGradient id="c40" x1="0" x2="1" y1="0" y2="0"><stop offset="0.000" stop-color="#add8ff"/><stop offset="0.071" stop-color="#b8d7ff"/><stop offset="0.143" stop-color="#c3d7ff"/><stop offset="0.214" stop-color="#ced7ff"/><stop offset="0.286" stop-color="#dad6ff"/><stop offset="0.357" stop-color="#e5d6ff"/><stop offset="0.429" stop-color="#f1d5ff"/><stop offset="0.500" stop-color="#fdd5ff"/><stop offset="0.571" stop-color="#ffccf5"/><stop offset="0.643" stop-color="#ffc2ea"/><stop offset="0.714" stop-color="#ffb9e0"/><stop offset="0.786" stop-color="#ffb1d6"/><stop offset="0.857" stop-color="#ffa9cd"/><stop offset="0.929" stop-color="#ffa2c4"/><stop offset="1.000" stop-color="#ff9bbc"/></linearGradient><linearGradient id="c41" x1="0" x2="1" y1="0" y2="0"><stop offset="0.000" stop-color="#add6ff"/><stop offset="0.071" stop-color="#b8d5ff"/><stop offset="0.143" stop-color="#c3d5ff"/><stop offset="0.214" stop-color="#ced4ff"/><stop offset="0.286" stop-color="#d9d4ff"/><stop offset="0.357" stop-color="#e5d4ff"/><stop offset="0.429" stop-color="#f1d3ff"/><stop offset="0.500" stop-color="#fdd3ff"/><stop offset="0.571" stop-color="#ffcaf5"/><stop offset="0.643" stop-color="#ffc1ea"/><stop offset="0.714" stop-color="#ffb8e0"/><stop offset="0.786" stop-color="#ffafd6"/><stop offset="0.857" stop-color="#ffa7cd"/><stop offset="0.929" stop-color="#ffa0c5"/><stop offset="1.000" stop-color="#ff99bd"/></linearGradient><linearGradient id="c42" x1="0" x2="1" y1="0" y2="0"><stop offset="0.000" stop-color="#aed4ff"/><stop offset="0.071" stop-color="#b8d3ff"/><stop offset="0.143" stop-color="#c3d3ff"/><stop offset="0.214" stop-color="#ced2ff"/><stop offset="0.286" stop-color="#d9d2ff"/><stop offset="0.357" stop-color="#e5d1ff"/><stop offset="0.429" stop-color="#f1d1ff"/><stop offset="0.500" stop-color="#fdd0ff"/><stop offset="0.571" stop-color="#ffc8f5"/><stop offset="0.643" stop-color="#ffbfea"/><stop offset="0.714" stop-color="#ffb6e0"/><stop offset="0.786" stop-color="#ffaed6"/><stop offset="0.857" stop-color="#ffa6cd"/><stop offset="0.929" stop-color="#ff9fc5"/><stop offset="1.000" stop-color="#ff98bd"/></linearGradient><linearGradient id="c43" x1="0" x2="1" y1="0" y2="0"><stop offset="0.000" stop-color="#aed1ff"/><stop offset="0.071" stop-color="#b8d1ff"/><stop offset="0.143" stop-color="#c3d1ff"/><stop offset="0.214" stop-color="#ced0ff"/><stop offset="0.286" stop-color="#d9d0ff"/><stop offset="0.357" stop-color="#e5cfff"/><stop offset="0.429" stop-color="#f1cfff"/><stop offset="0.500" stop-color="#fdceff"/><stop offset="0.571" stop-color="#ffc6f6"/><stop offset="0.643" stop-color="#ffbdeb"/><stop offset="0.714" stop-color="#ffb4e0"/><stop offset="0.786" stop-color="#ffacd7"/><stop offset="0.857" stop-color="#ffa4ce"/><stop offset="0.929" stop-color="#ff9dc5"/><stop offset="1.000" stop-color="#ff96bd"/></linearGradient><linearGradient id="c44" x1="0" x2="1" y1="0" y2="0"><stop offset="0.000" stop-color="#aecfff"/><stop offset="0.071" stop-color="#b8cfff"/><stop offset="0.143" stop-color="#c3ceff"/><stop offset="0.214" stop-color="#ceceff"/><stop offset="0.286" stop-color="#d9cdff"/><stop offset="0.357" stop-color="#e5cdff"/><stop offset="0.429" stop-color="#f0ccff"/><stop offset="0.500" stop-color="#fcccff"/><stop offset="0.571" stop-color="#ffc4f6"/><stop offset="0.643" stop-color="#ffbbeb"/><stop offset="0.714" stop-color="#ffb2e1"/><stop offset="0.786" stop-color="#ffaad7"/><stop offset="0.857" stop-color="#ffa3ce"/><stop offset="0.929" stop-color="#ff9bc6"/><stop offset="1.000" stop-color="#ff95be"/></linearGradient><linearGradient id="c45" x1="0" x2="1" y1="0" y2="0"><stop offset="0.000" stop-color="#aecdff"/><stop offset="0.071" stop-color="#b8cdff"/><stop offset="0.143" stop-color="#c3ccff"/><stop offset="0.214" stop-color="#ceccff"/><stop offset="0.286" stop-color="#d9cbff"/><stop offset="0.357" stop-color="#e5cbff"/><stop offset="0.429" stop-color="#f0caff"/><stop offset="0.500" stop-color="#fccaff"/><stop offset="0.571" stop-color="#ffc2f6"/><stop offset="0.643" stop-color="#ffb9eb"/><stop offset="0.714" stop-color="#ffb0e1"/><stop offset="0.786" stop-color="#ffa8d7"/><stop offset="0.857" stop-color="#ffa1ce"/><stop offset="0.929" stop-color="#ff9ac6"/><stop offset="1.000" stop-color="#ff93be"/></linearGradient></defs>
<rect x="0" y="0" width="1920" height="1039" fill="#333"/>
<g id="titlebar">
<rect x="0" y="0" width="1920" height="25" fill="#fff"/>
<g transform="translate(10.7,12.8) scale(0.97)"><path d="M0,-9.5 L4.6,-4.9 L0,-0.3 L-4.6,-4.9Z" fill="#f5cf22"/><path d="M9.5,0 L4.9,4.6 L0.3,0 L4.9,-4.6Z" fill="#22c422"/><path d="M-9.5,0 L-4.9,-4.6 L-0.3,0 L-4.9,4.6Z" fill="#3dbdf0"/><path d="M0,9.5 L-4.6,4.9 L0,0.3 L4.6,4.9Z" fill="#e0245e"/></g>
<text x="23.5" y="18" font-size="13" fill="#1a1a1a" textLength="443" lengthAdjust="spacingAndGlyphs" xml:space="preserve">Calman 2025 Calman Ultimate for Business 117 Days Remaining  - Untitled</text>
<path d="M1790,12.5 H1801" stroke="#222" stroke-width="1" fill="none"/>
<rect x="1842" y="9.5" width="8.5" height="8.5" fill="#fff" stroke="#222" stroke-width="1"/>
<path d="M1844.5,9.5 V7.5 H1853 V15.5 H1850.5" stroke="#222" stroke-width="1" fill="none"/>
<path d="M1895,7 L1906.5,18 M1906.5,7 L1895,18" stroke="#222" stroke-width="1.1" fill="none"/>
</g>
<g id="header">
<rect x="0" y="25" width="1920" height="74" fill="#232323"/>
<rect x="214.5" y="38.6" width="1706" height="7.8" fill="url(#rainbow)" opacity="0.32"/>
<rect x="214.5" y="39.7" width="1706" height="5.6" fill="url(#rainbow)"/>
<path d="M-1,25.8 H206.6 V54.4 a4.5,4.5 0 0 1 -4.5,4.5 H4 a4.5,4.5 0 0 1 -5,-4.5Z" fill="url(#redbtn)" stroke="#b88484" stroke-width="1"/>
<path d="M0,26 H206" stroke="#a01a1c" stroke-width="1"/>
<g transform="translate(38.7,41.9) rotate(45)"><rect x="-8.2" y="-8.2" width="16.4" height="16.4" fill="none" stroke="#fff" stroke-width="3.1" stroke-linejoin="round"/><g fill="#fff"><rect x="-5.5" y="-5.5" width="4.6" height="4.6" rx="0.7"/><rect x="0.9" y="-5.5" width="4.6" height="4.6" rx="0.7"/><rect x="-5.5" y="0.9" width="4.6" height="4.6" rx="0.7"/><rect x="0.9" y="0.9" width="4.6" height="4.6" rx="0.7"/></g><g fill="#d4262a"><rect x="-0.45" y="-10.2" width="0.9" height="4" /><rect x="-0.45" y="6.2" width="0.9" height="4"/><rect x="-10.2" y="-0.45" width="4" height="0.9"/><rect x="6.2" y="-0.45" width="4" height="0.9"/></g></g>
<text x="56.3" y="49.8" font-size="28.5" fill="#fff" textLength="96.5" lengthAdjust="spacingAndGlyphs" stroke="#fff" stroke-width="0.55" stroke-linejoin="round">calman</text>
<circle cx="187.3" cy="41.2" r="10.3" fill="url(#redcirc)"/>
<path d="M181.8,40 H193.2 L187.5,46.2Z" fill="#fff"/>
<rect x="-4" y="65.6" width="33.6" height="30.8" rx="4.5" fill="url(#gbtn)" stroke="#c8c8c8" stroke-width="1.4"/>
<circle cx="14.5" cy="81.1" r="11" fill="url(#gcirc)"/>
<path d="M11,75 L17.3,80.6 L11,86.2Z" fill="#fff"/>
<path d="M33.2,99.2 V70.6 a5,5 0 0 1 5,-5 H131.6 a5,5 0 0 1 5,5 V99.2" fill="url(#tab)" stroke="#666" stroke-width="1.6"/>
<path d="M98.8,66 V99" stroke="#606060" stroke-width="1.8"/>
<text x="40" y="88.1" font-size="14" fill="#f0f0f0" textLength="52.3" lengthAdjust="spacingAndGlyphs">History 1</text>
<circle cx="116.4" cy="84.2" r="10.2" fill="url(#pluscirc)"/>
<path d="M113.2,85.5 H119.8 M116.5,82.2 V88.8" stroke="#a8a8a8" stroke-width="1.2"/>
<path d="M1284,99.2 V69.5 a4.5,4.5 0 0 1 4.5,-4.5 H1440.5 a4.5,4.5 0 0 1 4.5,4.5 V99.2Z" fill="url(#panel)"/>
<path d="M1284,99.2 V69.5 a4.5,4.5 0 0 1 4.5,-4.5 H1291.6 V99.2Z" fill="#16e216"/>
<path d="M1404.8,67 V99" stroke="#3c3c3c" stroke-width="1.7"/>
<text x="1294" y="78.5" font-size="12.3" fill="#fff" textLength="74" lengthAdjust="spacingAndGlyphs" stroke="#fff" stroke-width="0.3">X-Rite i1Pro 2</text>
<text x="1294" y="95" font-size="12.3" fill="#fff" textLength="63" lengthAdjust="spacingAndGlyphs" stroke="#fff" stroke-width="0.3">Direct View</text>
<circle cx="1382.5" cy="82.5" r="10.3" fill="url(#dcirc)"/>
<path d="M1377.0,80.9 H1388.0 L1382.5,86.4Z" fill="#fff"/>
<circle cx="1428" cy="82" r="14.1" fill="#0000ea" stroke="#f4f4ff" stroke-width="1.4"/>
<text x="1428.1" y="85.8" font-size="9.8" fill="#fff" font-weight="bold" text-anchor="middle" textLength="16.4" lengthAdjust="spacingAndGlyphs">239</text>
<path d="M1452,99.2 V69.5 a4.5,4.5 0 0 1 4.5,-4.5 H1682.5 a4.5,4.5 0 0 1 4.5,4.5 V99.2Z" fill="url(#panel)"/>
<path d="M1452,99.2 V69.5 a4.5,4.5 0 0 1 4.5,-4.5 H1459.6 V99.2Z" fill="#16e216"/>
<text x="1462" y="78.5" font-size="12.3" fill="#fff" textLength="192" lengthAdjust="spacingAndGlyphs" stroke="#fff" stroke-width="0.3">CalMAN Client 3 Pattern Generator</text>
<circle cx="1669" cy="82.5" r="10.3" fill="url(#dcirc)"/>
<path d="M1663.5,80.9 H1674.5 L1669,86.4Z" fill="#fff"/>
<path d="M1694.5,99.2 V69.5 a4.5,4.5 0 0 1 4.5,-4.5 H1851.0 a4.5,4.5 0 0 1 4.5,4.5 V99.2Z" fill="url(#panel)"/>
<path d="M1694.5,99.2 V69.5 a4.5,4.5 0 0 1 4.5,-4.5 H1700.8 V99.2Z" fill="#e8e800"/>
<text x="1704" y="78.5" font-size="12.3" fill="#fff" textLength="119" lengthAdjust="spacingAndGlyphs" stroke="#fff" stroke-width="0.3">Direct Display Control</text>
<circle cx="1837.5" cy="82.5" r="10.3" fill="url(#dcirc)"/>
<path d="M1832.0,80.9 H1843.0 L1837.5,86.4Z" fill="#fff"/>
<rect x="1860" y="65.5" width="37" height="31" rx="4" fill="url(#gbtn)" stroke="#c4c4c4" stroke-width="1"/>
<circle cx="1878.5" cy="81" r="11" fill="url(#gcirc)"/>
<g transform="translate(1878.4,81.2)" fill="#ececec"><path d="M-1.7,-4.6 L-0.9,-7.3 H0.9 L1.7,-4.6Z" transform="rotate(0)"/><path d="M-1.7,-4.6 L-0.9,-7.3 H0.9 L1.7,-4.6Z" transform="rotate(45)"/><path d="M-1.7,-4.6 L-0.9,-7.3 H0.9 L1.7,-4.6Z" transform="rotate(90)"/><path d="M-1.7,-4.6 L-0.9,-7.3 H0.9 L1.7,-4.6Z" transform="rotate(135)"/><path d="M-1.7,-4.6 L-0.9,-7.3 H0.9 L1.7,-4.6Z" transform="rotate(180)"/><path d="M-1.7,-4.6 L-0.9,-7.3 H0.9 L1.7,-4.6Z" transform="rotate(225)"/><path d="M-1.7,-4.6 L-0.9,-7.3 H0.9 L1.7,-4.6Z" transform="rotate(270)"/><path d="M-1.7,-4.6 L-0.9,-7.3 H0.9 L1.7,-4.6Z" transform="rotate(315)"/><circle r="4.3" fill="none" stroke="#ececec" stroke-width="1.9"/></g>
<rect x="1898.5" y="65.5" width="30" height="31" rx="4" fill="url(#gbtn)" stroke="#c4c4c4" stroke-width="1"/>
<circle cx="1914" cy="81" r="10.8" fill="url(#gcirc)"/>
<path d="M1916.8,74.5 L1910.5,80.4 L1916.8,86.2Z" fill="#fff"/>
</g>
<g id="main">
<text x="103" y="162.3" font-size="43" fill="#f4f4f4" textLength="176" lengthAdjust="spacingAndGlyphs">Grayscale</text>
<rect x="124.2" y="220.7" width="329.8" height="265.8" fill="#242424"/>
<path d="M168.1,220.7 V486.5" stroke="#8a8a8a" stroke-width="1.8"/>
<path d="M212.1,220.7 V486.5" stroke="#8a8a8a" stroke-width="1.8"/>
<path d="M256.0,220.7 V486.5" stroke="#8a8a8a" stroke-width="1.8"/>
<path d="M299.9,220.7 V486.5" stroke="#8a8a8a" stroke-width="1.8"/>
<path d="M343.8,220.7 V486.5" stroke="#8a8a8a" stroke-width="1.8"/>
<path d="M387.8,220.7 V486.5" stroke="#8a8a8a" stroke-width="1.8"/>
<path d="M431.7,220.7 V486.5" stroke="#8a8a8a" stroke-width="1.8"/>
<text x="276" y="215.3" font-size="15" fill="#dcdcdc" text-anchor="middle" textLength="84" lengthAdjust="spacingAndGlyphs">DeltaE 2000</text>
<rect x="125.0" y="222.3" width="43.7" height="19.4" fill="#030303"/>
<rect x="125.0" y="224.3" width="41.9" height="15.4" fill="url(#bar0)"/>
<rect x="125.0" y="246.5" width="19.8" height="19.4" fill="#030303"/>
<rect x="125.0" y="248.5" width="18.0" height="15.4" fill="url(#bar1)"/>
<rect x="125.0" y="270.7" width="23.5" height="19.4" fill="#030303"/>
<rect x="125.0" y="272.7" width="21.7" height="15.4" fill="url(#bar2)"/>
<rect x="125.0" y="294.9" width="19.6" height="19.4" fill="#030303"/>
<rect x="125.0" y="296.9" width="17.8" height="15.4" fill="url(#bar3)"/>
<rect x="125.0" y="319.1" width="17.8" height="19.4" fill="#030303"/>
<rect x="125.0" y="321.1" width="16.0" height="15.4" fill="url(#bar4)"/>
<rect x="125.0" y="343.3" width="13.9" height="19.4" fill="#030303"/>
<rect x="125.0" y="345.3" width="12.1" height="15.4" fill="url(#bar5)"/>
<rect x="125.0" y="367.5" width="15.0" height="19.4" fill="#030303"/>
<rect x="125.0" y="369.5" width="13.2" height="15.4" fill="url(#bar6)"/>
<rect x="125.0" y="391.7" width="26.4" height="19.4" fill="#030303"/>
<rect x="125.0" y="393.7" width="24.6" height="15.4" fill="url(#bar7)"/>
<rect x="125.0" y="415.9" width="31.4" height="19.4" fill="#030303"/>
<rect x="125.0" y="417.9" width="29.6" height="15.4" fill="url(#bar8)"/>
<rect x="125.0" y="440.1" width="41.1" height="19.4" fill="#030303"/>
<rect x="125.0" y="442.1" width="39.3" height="15.4" fill="url(#bar9)"/>
<rect x="125.0" y="464.3" width="18.7" height="19.4" fill="#030303"/>
<rect x="125.0" y="466.3" width="16.9" height="15.4" fill="url(#bar10)"/>
<rect x="124.2" y="220.7" width="329.8" height="265.8" fill="none" stroke="#a8a8a8" stroke-width="1.7"/>
<path d="M117.2,220.7 H124.2" stroke="#e0e0e0" stroke-width="1.6"/>
<text x="123.3" y="238.7" font-size="15" fill="#dcdcdc" text-anchor="end">100</text>
<path d="M117.2,244.9 H124.2" stroke="#e0e0e0" stroke-width="1.6"/>
<text x="123.3" y="262.8" font-size="15" fill="#dcdcdc" text-anchor="end">90</text>
<path d="M117.2,269.0 H124.2" stroke="#e0e0e0" stroke-width="1.6"/>
<text x="123.3" y="287.0" font-size="15" fill="#dcdcdc" text-anchor="end">80</text>
<path d="M117.2,293.2 H124.2" stroke="#e0e0e0" stroke-width="1.6"/>
<text x="123.3" y="311.1" font-size="15" fill="#dcdcdc" text-anchor="end">70</text>
<path d="M117.2,317.4 H124.2" stroke="#e0e0e0" stroke-width="1.6"/>
<text x="123.3" y="335.2" font-size="15" fill="#dcdcdc" text-anchor="end">60</text>
<path d="M117.2,341.5 H124.2" stroke="#e0e0e0" stroke-width="1.6"/>
<text x="123.3" y="359.3" font-size="15" fill="#dcdcdc" text-anchor="end">50</text>
<path d="M117.2,365.7 H124.2" stroke="#e0e0e0" stroke-width="1.6"/>
<text x="123.3" y="383.5" font-size="15" fill="#dcdcdc" text-anchor="end">40</text>
<path d="M117.2,389.8 H124.2" stroke="#e0e0e0" stroke-width="1.6"/>
<text x="123.3" y="407.6" font-size="15" fill="#dcdcdc" text-anchor="end">30</text>
<path d="M117.2,414.0 H124.2" stroke="#e0e0e0" stroke-width="1.6"/>
<text x="123.3" y="431.7" font-size="15" fill="#dcdcdc" text-anchor="end">20</text>
<path d="M117.2,438.2 H124.2" stroke="#e0e0e0" stroke-width="1.6"/>
<text x="123.3" y="455.9" font-size="15" fill="#dcdcdc" text-anchor="end">10</text>
<path d="M117.2,462.3 H124.2" stroke="#e0e0e0" stroke-width="1.6"/>
<text x="123.3" y="480.0" font-size="15" fill="#dcdcdc" text-anchor="end">0</text>
<path d="M117.2,486.5 H124.2" stroke="#e0e0e0" stroke-width="1.6"/>
<path d="M124.2,486.5 V492.8" stroke="#e0e0e0" stroke-width="1.7"/>
<text x="123.9" y="508.9" font-size="15" fill="#dcdcdc" text-anchor="middle">0</text>
<path d="M168.1,486.5 V492.8" stroke="#e0e0e0" stroke-width="1.7"/>
<text x="167.8" y="508.9" font-size="15" fill="#dcdcdc" text-anchor="middle">2</text>
<path d="M212.1,486.5 V492.8" stroke="#e0e0e0" stroke-width="1.7"/>
<text x="211.8" y="508.9" font-size="15" fill="#dcdcdc" text-anchor="middle">4</text>
<path d="M256.0,486.5 V492.8" stroke="#e0e0e0" stroke-width="1.7"/>
<text x="255.7" y="508.9" font-size="15" fill="#dcdcdc" text-anchor="middle">6</text>
<path d="M299.9,486.5 V492.8" stroke="#e0e0e0" stroke-width="1.7"/>
<text x="299.6" y="508.9" font-size="15" fill="#dcdcdc" text-anchor="middle">8</text>
<path d="M343.8,486.5 V492.8" stroke="#e0e0e0" stroke-width="1.7"/>
<text x="343.5" y="508.9" font-size="15" fill="#dcdcdc" text-anchor="middle">10</text>
<path d="M387.8,486.5 V492.8" stroke="#e0e0e0" stroke-width="1.7"/>
<text x="387.5" y="508.9" font-size="15" fill="#dcdcdc" text-anchor="middle">12</text>
<path d="M431.7,486.5 V492.8" stroke="#e0e0e0" stroke-width="1.7"/>
<text x="431.4" y="508.9" font-size="15" fill="#dcdcdc" text-anchor="middle">14</text>
<rect x="529.0" y="148.4" width="606.2" height="338.8" fill="#242424"/>
<path d="M529.0,150.0 H1135.2" stroke="#8c8c8c" stroke-width="2"/>
<path d="M522.0,150.0 H528.0" stroke="#e0e0e0" stroke-width="1.6"/>
<text x="521.0" y="154.9" font-size="15" fill="#dcdcdc" text-anchor="end">120</text>
<path d="M529.0,191.2 H1135.2" stroke="#8c8c8c" stroke-width="2"/>
<path d="M522.0,191.2 H528.0" stroke="#e0e0e0" stroke-width="1.6"/>
<text x="521.0" y="197.2" font-size="15" fill="#dcdcdc" text-anchor="end">115</text>
<path d="M529.0,233.6 H1135.2" stroke="#8c8c8c" stroke-width="2"/>
<path d="M522.0,233.6 H528.0" stroke="#e0e0e0" stroke-width="1.6"/>
<text x="521.0" y="239.4" font-size="15" fill="#dcdcdc" text-anchor="end">110</text>
<path d="M529.0,275.8 H1135.2" stroke="#8c8c8c" stroke-width="2"/>
<path d="M522.0,275.8 H528.0" stroke="#e0e0e0" stroke-width="1.6"/>
<text x="521.0" y="281.7" font-size="15" fill="#dcdcdc" text-anchor="end">105</text>
<path d="M529.0,319.2 H1135.2" stroke="#8c8c8c" stroke-width="2"/>
<path d="M522.0,319.2 H528.0" stroke="#e0e0e0" stroke-width="1.6"/>
<text x="521.0" y="323.9" font-size="15" fill="#dcdcdc" text-anchor="end">100</text>
<path d="M529.0,360.6 H1135.2" stroke="#8c8c8c" stroke-width="2"/>
<path d="M522.0,360.6 H528.0" stroke="#e0e0e0" stroke-width="1.6"/>
<text x="521.0" y="366.2" font-size="15" fill="#dcdcdc" text-anchor="end">95</text>
<path d="M529.0,403.3 H1135.2" stroke="#8c8c8c" stroke-width="2"/>
<path d="M522.0,403.3 H528.0" stroke="#e0e0e0" stroke-width="1.6"/>
<text x="521.0" y="408.5" font-size="15" fill="#dcdcdc" text-anchor="end">90</text>
<path d="M529.0,444.9 H1135.2" stroke="#8c8c8c" stroke-width="2"/>
<path d="M522.0,444.9 H528.0" stroke="#e0e0e0" stroke-width="1.6"/>
<text x="521.0" y="450.7" font-size="15" fill="#dcdcdc" text-anchor="end">85</text>
<path d="M529.0,486.4 H1135.2" stroke="#8c8c8c" stroke-width="2"/>
<path d="M522.0,486.4 H528.0" stroke="#e0e0e0" stroke-width="1.6"/>
<text x="521.0" y="493.0" font-size="15" fill="#dcdcdc" text-anchor="end">80</text>
<clipPath id="rclip"><rect x="529.0" y="148.4" width="606.2" height="338.8"/></clipPath><g clip-path="url(#rclip)">
<polyline points="529.0,316.5 589.6,342.9 650.2,330.8 710.9,325.3 771.5,318.2 832.1,316.5 892.7,315.6 953.3,314.8 1014.0,315.6 1074.6,316.9 1135.2,312.7" fill="none" stroke="#ee1111" stroke-width="3.2" stroke-linejoin="round"/>
<polyline points="529.0,313.1 589.6,341.7 650.2,327.8 710.9,322.4 771.5,319.8 832.1,317.7 892.7,317.3 953.3,316.5 1014.0,316.5 1074.6,316.9 1135.2,316.5" fill="none" stroke="#118811" stroke-width="3.2" stroke-linejoin="round"/>
<polyline points="529.0,308.1 589.6,340.0 650.2,332.4 710.9,327.0 771.5,322.4 832.1,321.5 892.7,321.9 953.3,321.5 1014.0,321.5 1074.6,321.5 1135.2,327.8" fill="none" stroke="#0000ee" stroke-width="3.4" stroke-linejoin="round"/>
</g>
<rect x="529.0" y="148.4" width="606.2" height="338.8" fill="none" stroke="#949494" stroke-width="2"/>
<path d="M529.0,488.2 V493.0" stroke="#e0e0e0" stroke-width="1.7"/>
<text x="528.5" y="508.9" font-size="15" fill="#dcdcdc" text-anchor="middle">0</text>
<path d="M589.6,488.2 V493.0" stroke="#e0e0e0" stroke-width="1.7"/>
<text x="589.1" y="508.9" font-size="15" fill="#dcdcdc" text-anchor="middle">10</text>
<path d="M650.2,488.2 V493.0" stroke="#e0e0e0" stroke-width="1.7"/>
<text x="649.7" y="508.9" font-size="15" fill="#dcdcdc" text-anchor="middle">20</text>
<path d="M710.9,488.2 V493.0" stroke="#e0e0e0" stroke-width="1.7"/>
<text x="710.4" y="508.9" font-size="15" fill="#dcdcdc" text-anchor="middle">30</text>
<path d="M771.5,488.2 V493.0" stroke="#e0e0e0" stroke-width="1.7"/>
<text x="771.0" y="508.9" font-size="15" fill="#dcdcdc" text-anchor="middle">40</text>
<path d="M832.1,488.2 V493.0" stroke="#e0e0e0" stroke-width="1.7"/>
<text x="831.6" y="508.9" font-size="15" fill="#dcdcdc" text-anchor="middle">50</text>
<path d="M892.7,488.2 V493.0" stroke="#e0e0e0" stroke-width="1.7"/>
<text x="892.2" y="508.9" font-size="15" fill="#dcdcdc" text-anchor="middle">60</text>
<path d="M953.3,488.2 V493.0" stroke="#e0e0e0" stroke-width="1.7"/>
<text x="952.8" y="508.9" font-size="15" fill="#dcdcdc" text-anchor="middle">70</text>
<path d="M1014.0,488.2 V493.0" stroke="#e0e0e0" stroke-width="1.7"/>
<text x="1013.5" y="508.9" font-size="15" fill="#dcdcdc" text-anchor="middle">80</text>
<path d="M1074.6,488.2 V493.0" stroke="#e0e0e0" stroke-width="1.7"/>
<text x="1074.1" y="508.9" font-size="15" fill="#dcdcdc" text-anchor="middle">90</text>
<path d="M1135.2,488.2 V493.0" stroke="#e0e0e0" stroke-width="1.7"/>
<text x="1134.7" y="508.9" font-size="15" fill="#dcdcdc" text-anchor="middle">100</text>
<text x="815" y="143" font-size="15" fill="#dcdcdc" text-anchor="middle" textLength="89" lengthAdjust="spacingAndGlyphs">RGB Balance</text>
<rect x="1205.2" y="148.3" width="610.8" height="338.1" fill="#242424"/>
<path d="M1205.2,482.6 H1816.0" stroke="#929292" stroke-width="1.9"/>
<path d="M1198.6000000000001,482.6 H1204.2" stroke="#e0e0e0" stroke-width="1.6"/>
<text x="1197.6000000000001" y="488.1" font-size="15" fill="#dcdcdc" text-anchor="end">1</text>
<path d="M1205.2,440.4 H1816.0" stroke="#929292" stroke-width="1.9"/>
<path d="M1198.6000000000001,440.4 H1204.2" stroke="#e0e0e0" stroke-width="1.6"/>
<text x="1197.6000000000001" y="445.9" font-size="15" fill="#dcdcdc" text-anchor="end">1,2</text>
<path d="M1205.2,398.2 H1816.0" stroke="#929292" stroke-width="1.9"/>
<path d="M1198.6000000000001,398.2 H1204.2" stroke="#e0e0e0" stroke-width="1.6"/>
<text x="1197.6000000000001" y="403.7" font-size="15" fill="#dcdcdc" text-anchor="end">1,4</text>
<path d="M1205.2,356.1 H1816.0" stroke="#929292" stroke-width="1.9"/>
<path d="M1198.6000000000001,356.1 H1204.2" stroke="#e0e0e0" stroke-width="1.6"/>
<text x="1197.6000000000001" y="361.6" font-size="15" fill="#dcdcdc" text-anchor="end">1,6</text>
<path d="M1205.2,313.9 H1816.0" stroke="#929292" stroke-width="1.9"/>
<path d="M1198.6000000000001,313.9 H1204.2" stroke="#e0e0e0" stroke-width="1.6"/>
<text x="1197.6000000000001" y="319.4" font-size="15" fill="#dcdcdc" text-anchor="end">1,8</text>
<path d="M1205.2,271.7 H1816.0" stroke="#929292" stroke-width="1.9"/>
<path d="M1198.6000000000001,271.7 H1204.2" stroke="#e0e0e0" stroke-width="1.6"/>
<text x="1197.6000000000001" y="277.2" font-size="15" fill="#dcdcdc" text-anchor="end">2</text>
<path d="M1205.2,229.5 H1816.0" stroke="#929292" stroke-width="1.9"/>
<path d="M1198.6000000000001,229.5 H1204.2" stroke="#e0e0e0" stroke-width="1.6"/>
<text x="1197.6000000000001" y="235.0" font-size="15" fill="#dcdcdc" text-anchor="end">2,2</text>
<path d="M1205.2,187.3 H1816.0" stroke="#929292" stroke-width="1.9"/>
<path d="M1198.6000000000001,187.3 H1204.2" stroke="#e0e0e0" stroke-width="1.6"/>
<text x="1197.6000000000001" y="192.8" font-size="15" fill="#dcdcdc" text-anchor="end">2,4</text>
<polyline points="1204.2,421.5 1265.7,231.7 1326.8,228.5 1387.9,225 1449,220.6 1510.2,218.6 1571.3,216.2 1632.4,216.6 1693.5,216.4 1754.6,207.4 1815.7,210.9" fill="none" stroke="#8c8c8c" stroke-width="2.6" stroke-linejoin="round"/>
<polyline points="1204.3,421 1205.2,404 1206.3,392.5 1208,374 1210.5,358 1213.5,348 1217.5,337.5 1221.5,327 1226.2,317.5 1230.5,309.5 1235,302.5 1242,293 1250,283.7 1257.5,277 1265.7,271.2 1277,263.2 1290,256.2 1302,251.5 1315,247.5 1327,244.2 1340,241.2 1365,236.2 1390,232.5 1415,229.5 1449,226.8 1510.2,222.2 1571.3,218.6 1632.4,216 1693.5,214.1 1754.6,212.5 1815.7,211.5" fill="none" stroke="#f4f41c" stroke-width="3" stroke-linejoin="round" stroke-linecap="round"/>
<rect x="1205.2" y="148.3" width="610.8" height="338.1" fill="none" stroke="#9e9e9e" stroke-width="2"/>
<path d="M1205.2,487.4 V492.9" stroke="#e0e0e0" stroke-width="1.7"/>
<text x="1204.4" y="508.9" font-size="15" fill="#dcdcdc" text-anchor="middle">0</text>
<path d="M1266.3,487.4 V492.9" stroke="#e0e0e0" stroke-width="1.7"/>
<text x="1265.5" y="508.9" font-size="15" fill="#dcdcdc" text-anchor="middle">10</text>
<path d="M1327.4,487.4 V492.9" stroke="#e0e0e0" stroke-width="1.7"/>
<text x="1326.6" y="508.9" font-size="15" fill="#dcdcdc" text-anchor="middle">20</text>
<path d="M1388.4,487.4 V492.9" stroke="#e0e0e0" stroke-width="1.7"/>
<text x="1387.6" y="508.9" font-size="15" fill="#dcdcdc" text-anchor="middle">30</text>
<path d="M1449.5,487.4 V492.9" stroke="#e0e0e0" stroke-width="1.7"/>
<text x="1448.7" y="508.9" font-size="15" fill="#dcdcdc" text-anchor="middle">40</text>
<path d="M1510.6,487.4 V492.9" stroke="#e0e0e0" stroke-width="1.7"/>
<text x="1509.8" y="508.9" font-size="15" fill="#dcdcdc" text-anchor="middle">50</text>
<path d="M1571.7,487.4 V492.9" stroke="#e0e0e0" stroke-width="1.7"/>
<text x="1570.9" y="508.9" font-size="15" fill="#dcdcdc" text-anchor="middle">60</text>
<path d="M1632.8,487.4 V492.9" stroke="#e0e0e0" stroke-width="1.7"/>
<text x="1632.0" y="508.9" font-size="15" fill="#dcdcdc" text-anchor="middle">70</text>
<path d="M1693.8,487.4 V492.9" stroke="#e0e0e0" stroke-width="1.7"/>
<text x="1693.0" y="508.9" font-size="15" fill="#dcdcdc" text-anchor="middle">80</text>
<path d="M1754.9,487.4 V492.9" stroke="#e0e0e0" stroke-width="1.7"/>
<text x="1754.1" y="508.9" font-size="15" fill="#dcdcdc" text-anchor="middle">90</text>
<path d="M1816.0,487.4 V492.9" stroke="#e0e0e0" stroke-width="1.7"/>
<text x="1815.2" y="508.9" font-size="15" fill="#dcdcdc" text-anchor="middle">100</text>
<text x="1496" y="143" font-size="15" fill="#dcdcdc" text-anchor="middle" textLength="116" lengthAdjust="spacingAndGlyphs">Gamma Log/Log</text>
<text x="167.6" y="553.8" font-size="30.5" fill="#f4f4f4" textLength="229.5" lengthAdjust="spacingAndGlyphs">Avg dE2000: 1,2</text>
<text x="606" y="553.8" font-size="30.5" fill="#f4f4f4" textLength="202" lengthAdjust="spacingAndGlyphs">Avg CCT: 6419</text>
<text x="1005" y="553.8" font-size="30.5" fill="#f4f4f4" textLength="293" lengthAdjust="spacingAndGlyphs">Contrast Ratio: 1469</text>
<text x="1463" y="553.8" font-size="30.5" fill="#f4f4f4" textLength="270" lengthAdjust="spacingAndGlyphs">Total Gamma: 2,23</text>
<rect x="77" y="574.6" width="1774.3" height="139" fill="#000"/>
<rect x="359.2" y="581.5" width="105.8" height="54.5" fill="#020305"/>
<rect x="359.2" y="636" width="105.8" height="54.4" fill="#000"/>
<rect x="360.1" y="582.4" width="104" height="107.1" fill="none" stroke="#fff" stroke-width="1.8"/>
<text x="412.1" y="705.5" font-size="12.5" fill="#fff" text-anchor="middle">0</text>
<rect x="481.6" y="581.5" width="105.8" height="54.5" fill="#181818"/>
<rect x="481.6" y="636" width="105.8" height="54.4" fill="#1c1c1c"/>
<rect x="482.5" y="582.4" width="104" height="107.1" fill="none" stroke="#fff" stroke-width="1.8"/>
<text x="534.5" y="705.5" font-size="12.5" fill="#fff" text-anchor="middle">10</text>
<rect x="604.1" y="581.5" width="105.8" height="54.5" fill="#343434"/>
<rect x="604.1" y="636" width="105.8" height="54.4" fill="#373737"/>
<rect x="605.0" y="582.4" width="104" height="107.1" fill="none" stroke="#fff" stroke-width="1.8"/>
<text x="657.0" y="705.5" font-size="12.5" fill="#fff" text-anchor="middle">20</text>
<rect x="726.5" y="581.5" width="105.8" height="54.5" fill="#4d4d4d"/>
<rect x="726.5" y="636" width="105.8" height="54.4" fill="#4f4f4f"/>
<rect x="727.4" y="582.4" width="104" height="107.1" fill="none" stroke="#fff" stroke-width="1.8"/>
<text x="779.4" y="705.5" font-size="12.5" fill="#fff" text-anchor="middle">30</text>
<rect x="849.0" y="581.5" width="105.8" height="54.5" fill="#656565"/>
<rect x="849.0" y="636" width="105.8" height="54.4" fill="#676767"/>
<rect x="849.9" y="582.4" width="104" height="107.1" fill="none" stroke="#fff" stroke-width="1.8"/>
<text x="901.9" y="705.5" font-size="12.5" fill="#fff" text-anchor="middle">40</text>
<rect x="971.5" y="581.5" width="105.8" height="54.5" fill="#7f7f7f"/>
<rect x="971.5" y="636" width="105.8" height="54.4" fill="#808080"/>
<rect x="972.4" y="582.4" width="104" height="107.1" fill="none" stroke="#fff" stroke-width="1.8"/>
<text x="1024.4" y="705.5" font-size="12.5" fill="#fff" text-anchor="middle">50</text>
<rect x="1093.9" y="581.5" width="105.8" height="54.5" fill="#989898"/>
<rect x="1093.9" y="636" width="105.8" height="54.4" fill="#999"/>
<rect x="1094.8" y="582.4" width="104" height="107.1" fill="none" stroke="#fff" stroke-width="1.8"/>
<text x="1146.8" y="705.5" font-size="12.5" fill="#fff" text-anchor="middle">60</text>
<rect x="1216.3" y="581.5" width="105.8" height="54.5" fill="#b2b2b2"/>
<rect x="1216.3" y="636" width="105.8" height="54.4" fill="#b3b3b3"/>
<rect x="1217.2" y="582.4" width="104" height="107.1" fill="none" stroke="#fff" stroke-width="1.8"/>
<text x="1269.2" y="705.5" font-size="12.5" fill="#fff" text-anchor="middle">70</text>
<rect x="1338.8" y="581.5" width="105.8" height="54.5" fill="#cbcbcb"/>
<rect x="1338.8" y="636" width="105.8" height="54.4" fill="#ccc"/>
<rect x="1339.7" y="582.4" width="104" height="107.1" fill="none" stroke="#fff" stroke-width="1.8"/>
<text x="1391.7" y="705.5" font-size="12.5" fill="#fff" text-anchor="middle">80</text>
<rect x="1461.2" y="581.5" width="105.8" height="54.5" fill="#e5e5e4"/>
<rect x="1461.2" y="636" width="105.8" height="54.4" fill="#e6e6e6"/>
<rect x="1462.2" y="582.4" width="104" height="107.1" fill="none" stroke="#fff" stroke-width="1.8"/>
<text x="1514.2" y="705.5" font-size="12.5" fill="#fff" text-anchor="middle">90</text>
<rect x="1583.7" y="581.5" width="105.8" height="54.5" fill="#fffffb"/>
<rect x="1583.7" y="636" width="105.8" height="54.4" fill="#fff"/>
<rect x="1584.6" y="582.4" width="104" height="107.1" fill="none" stroke="#fff" stroke-width="1.8"/>
<text x="1636.6" y="705.5" font-size="12.5" fill="#fff" text-anchor="middle">100</text>
<text transform="translate(350.8,623.5) rotate(-90)" font-size="12.5" fill="#fff" textLength="37" lengthAdjust="spacingAndGlyphs">Actual</text>
<text transform="translate(350.8,684.5) rotate(-90)" font-size="12.5" fill="#fff" textLength="36.5" lengthAdjust="spacingAndGlyphs">Target</text>
<text x="92" y="770.3" font-size="30" fill="#f4f4f4" textLength="232.5" lengthAdjust="spacingAndGlyphs">Current Reading</text>
<text x="92" y="815.5" font-size="25.5" fill="#f4f4f4" textLength="108.5" lengthAdjust="spacingAndGlyphs">x: 0,3158</text>
<text x="92" y="858.9" font-size="25.5" fill="#f4f4f4" textLength="109.5" lengthAdjust="spacingAndGlyphs">y: 0,3328</text>
<text x="92" y="902" font-size="25.5" fill="#f4f4f4" textLength="117" lengthAdjust="spacingAndGlyphs">fL: 127,53</text>
<text x="92" y="945.3" font-size="25.5" fill="#f4f4f4" textLength="169" lengthAdjust="spacingAndGlyphs">cd/m²: 436,96</text>
<rect x="424.4" y="737.1" width="311.4" height="228.8" fill="#e6e6e6"/>
<rect x="431.4" y="744.1" width="297.4" height="214.8" fill="#333"/>
<g id="cie" shape-rendering="crispEdges">
<rect x="472.3" y="748.40" width="252.9" height="4.57" fill="url(#c0)"/>
<rect x="472.3" y="752.37" width="252.9" height="4.57" fill="url(#c1)"/>
<rect x="472.3" y="756.35" width="252.9" height="4.57" fill="url(#c2)"/>
<rect x="472.3" y="760.32" width="252.9" height="4.57" fill="url(#c3)"/>
<rect x="472.3" y="764.30" width="252.9" height="4.57" fill="url(#c4)"/>
<rect x="472.3" y="768.27" width="252.9" height="4.57" fill="url(#c5)"/>
<rect x="472.3" y="772.24" width="252.9" height="4.57" fill="url(#c6)"/>
<rect x="472.3" y="776.22" width="252.9" height="4.57" fill="url(#c7)"/>
<rect x="472.3" y="780.19" width="252.9" height="4.57" fill="url(#c8)"/>
<rect x="472.3" y="784.17" width="252.9" height="4.57" fill="url(#c9)"/>
<rect x="472.3" y="788.14" width="252.9" height="4.57" fill="url(#c10)"/>
<rect x="472.3" y="792.11" width="252.9" height="4.57" fill="url(#c11)"/>
<rect x="472.3" y="796.09" width="252.9" height="4.57" fill="url(#c12)"/>
<rect x="472.3" y="800.06" width="252.9" height="4.57" fill="url(#c13)"/>
<rect x="472.3" y="804.03" width="252.9" height="4.57" fill="url(#c14)"/>
<rect x="472.3" y="808.01" width="252.9" height="4.57" fill="url(#c15)"/>
<rect x="472.3" y="811.98" width="252.9" height="4.57" fill="url(#c16)"/>
<rect x="472.3" y="815.96" width="252.9" height="4.57" fill="url(#c17)"/>
<rect x="472.3" y="819.93" width="252.9" height="4.57" fill="url(#c18)"/>
<rect x="472.3" y="823.90" width="252.9" height="4.57" fill="url(#c19)"/>
<rect x="472.3" y="827.88" width="252.9" height="4.57" fill="url(#c20)"/>
<rect x="472.3" y="831.85" width="252.9" height="4.57" fill="url(#c21)"/>
<rect x="472.3" y="835.83" width="252.9" height="4.57" fill="url(#c22)"/>
<rect x="472.3" y="839.80" width="252.9" height="4.57" fill="url(#c23)"/>
<rect x="472.3" y="843.77" width="252.9" height="4.57" fill="url(#c24)"/>
<rect x="472.3" y="847.75" width="252.9" height="4.57" fill="url(#c25)"/>
<rect x="472.3" y="851.72" width="252.9" height="4.57" fill="url(#c26)"/>
<rect x="472.3" y="855.70" width="252.9" height="4.57" fill="url(#c27)"/>
<rect x="472.3" y="859.67" width="252.9" height="4.57" fill="url(#c28)"/>
<rect x="472.3" y="863.64" width="252.9" height="4.57" fill="url(#c29)"/>
<rect x="472.3" y="867.62" width="252.9" height="4.57" fill="url(#c30)"/>
<rect x="472.3" y="871.59" width="252.9" height="4.57" fill="url(#c31)"/>
<rect x="472.3" y="875.57" width="252.9" height="4.57" fill="url(#c32)"/>
<rect x="472.3" y="879.54" width="252.9" height="4.57" fill="url(#c33)"/>
<rect x="472.3" y="883.51" width="252.9" height="4.57" fill="url(#c34)"/>
<rect x="472.3" y="887.49" width="252.9" height="4.57" fill="url(#c35)"/>
<rect x="472.3" y="891.46" width="252.9" height="4.57" fill="url(#c36)"/>
<rect x="472.3" y="895.43" width="252.9" height="4.57" fill="url(#c37)"/>
<rect x="472.3" y="899.41" width="252.9" height="4.57" fill="url(#c38)"/>
<rect x="472.3" y="903.38" width="252.9" height="4.57" fill="url(#c39)"/>
<rect x="472.3" y="907.36" width="252.9" height="4.57" fill="url(#c40)"/>
<rect x="472.3" y="911.33" width="252.9" height="4.57" fill="url(#c41)"/>
<rect x="472.3" y="915.30" width="252.9" height="4.57" fill="url(#c42)"/>
<rect x="472.3" y="919.28" width="252.9" height="4.57" fill="url(#c43)"/>
<rect x="472.3" y="923.25" width="252.9" height="4.57" fill="url(#c44)"/>
<rect x="472.3" y="927.23" width="252.9" height="4.57" fill="url(#c45)"/>
</g>
<rect x="472.3" y="748.4" width="252.9" height="182.8" fill="none" stroke="#8a8a8a" stroke-width="1.5"/>
<clipPath id="cclip"><rect x="472.3" y="748.4" width="252.9" height="182.8"/></clipPath>
<path d="M504,932.5 Q610,855 726,777.5" clip-path="url(#cclip)" fill="none" stroke="#000" stroke-width="3.2"/>
<circle cx="581.8" cy="852.2" r="4.6" fill="#181818" stroke="#000" stroke-width="1.3"/>
<circle cx="613.9" cy="817.8" r="4.6" fill="#333" stroke="#000" stroke-width="1.3"/>
<circle cx="602.1" cy="824.6" r="4.6" fill="#4a4a4a" stroke="#000" stroke-width="1.3"/>
<circle cx="609.5" cy="829.5" r="4.6" fill="#666" stroke="#000" stroke-width="1.3"/>
<circle cx="607.5" cy="832.5" r="4.6" fill="#808080" stroke="#000" stroke-width="1.3"/>
<circle cx="605.5" cy="831.5" r="4.6" fill="#999" stroke="#000" stroke-width="1.3"/>
<circle cx="604" cy="833" r="4.6" fill="#b3b3b3" stroke="#000" stroke-width="1.3"/>
<rect x="590.6" y="832.2" width="14.4" height="14.2" fill="#fff" stroke="#000" stroke-width="1.5"/>
<circle cx="602.1" cy="832.2" r="4.6" fill="#ddd" stroke="#000" stroke-width="1.3"/>
<circle cx="614.3" cy="824.8" r="4.6" fill="#fff" stroke="#000" stroke-width="1.3"/>
<path d="M466.3,763.2 H472.3" stroke="#e0e0e0" stroke-width="1.6"/>
<text x="464.3" y="768.6" font-size="15" fill="#dcdcdc" text-anchor="end">0,35</text>
<path d="M466.3,799.9 H472.3" stroke="#e0e0e0" stroke-width="1.6"/>
<text x="464.3" y="805.3" font-size="15" fill="#dcdcdc" text-anchor="end">0,34</text>
<path d="M466.3,836.6 H472.3" stroke="#e0e0e0" stroke-width="1.6"/>
<text x="464.3" y="842.0" font-size="15" fill="#dcdcdc" text-anchor="end">0,33</text>
<path d="M466.3,873.3 H472.3" stroke="#e0e0e0" stroke-width="1.6"/>
<text x="464.3" y="878.7" font-size="15" fill="#dcdcdc" text-anchor="end">0,32</text>
<path d="M466.3,910.0 H472.3" stroke="#e0e0e0" stroke-width="1.6"/>
<text x="464.3" y="915.4" font-size="15" fill="#dcdcdc" text-anchor="end">0,31</text>
<path d="M482.0,931.2 V937.2" stroke="#e0e0e0" stroke-width="1.7"/>
<text x="482.0" y="953.5" font-size="15" fill="#dcdcdc" text-anchor="middle">0,29</text>
<path d="M532.7,931.2 V937.2" stroke="#e0e0e0" stroke-width="1.7"/>
<text x="532.7" y="953.5" font-size="15" fill="#dcdcdc" text-anchor="middle">0,3</text>
<path d="M583.4,931.2 V937.2" stroke="#e0e0e0" stroke-width="1.7"/>
<text x="583.4" y="953.5" font-size="15" fill="#dcdcdc" text-anchor="middle">0,31</text>
<path d="M634.1,931.2 V937.2" stroke="#e0e0e0" stroke-width="1.7"/>
<text x="634.1" y="953.5" font-size="15" fill="#dcdcdc" text-anchor="middle">0,32</text>
<path d="M684.8,931.2 V937.2" stroke="#e0e0e0" stroke-width="1.7"/>
<text x="684.8" y="953.5" font-size="15" fill="#dcdcdc" text-anchor="middle">0,33</text>
<rect x="743" y="723" width="930.5" height="224.5" fill="#0c0c0c"/>
<rect x="745" y="724.5" width="927.0" height="29.5" fill="url(#thead)"/>
<text x="945.5" y="745.7" font-size="16" fill="#fff" text-anchor="middle">0</text>
<text x="1019.2" y="745.7" font-size="16" fill="#fff" text-anchor="middle">10</text>
<text x="1087.9" y="745.7" font-size="16" fill="#fff" text-anchor="middle">20</text>
<text x="1156.6" y="745.7" font-size="16" fill="#fff" text-anchor="middle">30</text>
<text x="1225.3" y="745.7" font-size="16" fill="#fff" text-anchor="middle">40</text>
<text x="1294.0" y="745.7" font-size="16" fill="#fff" text-anchor="middle">50</text>
<text x="1362.7" y="745.7" font-size="16" fill="#fff" text-anchor="middle">60</text>
<text x="1431.4" y="745.7" font-size="16" fill="#fff" text-anchor="middle">70</text>
<text x="1500.1" y="745.7" font-size="16" fill="#fff" text-anchor="middle">80</text>
<text x="1568.8" y="745.7" font-size="16" fill="#fff" text-anchor="middle">90</text>
<text x="1637.5" y="745.7" font-size="16" fill="#fff" text-anchor="middle">100</text>
<rect x="745" y="754.00" width="927.0" height="27.72" fill="#444"/>
<text x="758" y="774.6" font-size="16" fill="#fff" font-weight="bold" textLength="63.5" lengthAdjust="spacingAndGlyphs">x: CIE31</text>
<text x="911.3" y="774.6" font-size="16.2" fill="#f2f2f2">0,24</text>
<text x="989.3" y="774.6" font-size="16.2" fill="#f2f2f2">0,31</text>
<text x="1058.0" y="774.6" font-size="16.2" fill="#f2f2f2">0,32</text>
<text x="1126.8" y="774.6" font-size="16.2" fill="#f2f2f2">0,31</text>
<text x="1195.5" y="774.6" font-size="16.2" fill="#f2f2f2">0,31</text>
<text x="1264.3" y="774.6" font-size="16.2" fill="#f2f2f2">0,31</text>
<text x="1333.0" y="774.6" font-size="16.2" fill="#f2f2f2">0,31</text>
<text x="1401.8" y="774.6" font-size="16.2" fill="#f2f2f2">0,31</text>
<text x="1470.5" y="774.6" font-size="16.2" fill="#f2f2f2">0,31</text>
<text x="1539.3" y="774.6" font-size="16.2" fill="#f2f2f2">0,31</text>
<text x="1608.0" y="774.6" font-size="16.2" fill="#f2f2f2">0,32</text>
<rect x="745" y="781.42" width="927.0" height="27.72" fill="#7c7c7c"/>
<text x="758" y="802.0" font-size="16" fill="#fff" font-weight="bold" textLength="63.5" lengthAdjust="spacingAndGlyphs">y: CIE31</text>
<text x="911.3" y="802.0" font-size="16.2" fill="#f2f2f2">0,26</text>
<text x="989.3" y="802.0" font-size="16.2" fill="#f2f2f2">0,33</text>
<text x="1058.0" y="802.0" font-size="16.2" fill="#f2f2f2">0,33</text>
<text x="1126.8" y="802.0" font-size="16.2" fill="#f2f2f2">0,33</text>
<text x="1195.5" y="802.0" font-size="16.2" fill="#f2f2f2">0,33</text>
<text x="1264.3" y="802.0" font-size="16.2" fill="#f2f2f2">0,33</text>
<text x="1333.0" y="802.0" font-size="16.2" fill="#f2f2f2">0,33</text>
<text x="1401.8" y="802.0" font-size="16.2" fill="#f2f2f2">0,33</text>
<text x="1470.5" y="802.0" font-size="16.2" fill="#f2f2f2">0,33</text>
<text x="1539.3" y="802.0" font-size="16.2" fill="#f2f2f2">0,33</text>
<text x="1608.0" y="802.0" font-size="16.2" fill="#f2f2f2">0,33</text>
<rect x="745" y="808.84" width="927.0" height="27.72" fill="#444"/>
<text x="758" y="829.4" font-size="16" fill="#fff" font-weight="bold" textLength="10" lengthAdjust="spacingAndGlyphs">Y</text>
<text x="911.3" y="829.4" font-size="16.2" fill="#f2f2f2">0,30</text>
<text x="989.3" y="829.4" font-size="16.2" fill="#f2f2f2">3,02</text>
<text x="1058.0" y="829.4" font-size="16.2" fill="#f2f2f2">12,81</text>
<text x="1126.8" y="829.4" font-size="16.2" fill="#f2f2f2">30,06</text>
<text x="1195.5" y="829.4" font-size="16.2" fill="#f2f2f2">56,54</text>
<text x="1264.3" y="829.4" font-size="16.2" fill="#f2f2f2">93,70</text>
<text x="1333.0" y="829.4" font-size="16.2" fill="#f2f2f2">138,46</text>
<text x="1401.8" y="829.4" font-size="16.2" fill="#f2f2f2">194,65</text>
<text x="1470.5" y="829.4" font-size="16.2" fill="#f2f2f2">264,24</text>
<text x="1539.3" y="829.4" font-size="16.2" fill="#f2f2f2">344,97</text>
<text x="1608.0" y="829.4" font-size="16.2" fill="#f2f2f2">436,96</text>
<rect x="745" y="836.26" width="927.0" height="27.72" fill="#7c7c7c"/>
<text x="758" y="856.9" font-size="16" fill="#fff" font-weight="bold" textLength="66.5" lengthAdjust="spacingAndGlyphs">Target Y</text>
<text x="911.3" y="856.9" font-size="16.2" fill="#f2f2f2">0,00</text>
<text x="989.3" y="856.9" font-size="16.2" fill="#f2f2f2">4,51</text>
<text x="1058.0" y="856.9" font-size="16.2" fill="#f2f2f2">14,47</text>
<text x="1126.8" y="856.9" font-size="16.2" fill="#f2f2f2">31,58</text>
<text x="1195.5" y="856.9" font-size="16.2" fill="#f2f2f2">58,06</text>
<text x="1264.3" y="856.9" font-size="16.2" fill="#f2f2f2">94,32</text>
<text x="1333.0" y="856.9" font-size="16.2" fill="#f2f2f2">139,19</text>
<text x="1401.8" y="856.9" font-size="16.2" fill="#f2f2f2">194,53</text>
<text x="1470.5" y="856.9" font-size="16.2" fill="#f2f2f2">263,85</text>
<text x="1539.3" y="856.9" font-size="16.2" fill="#f2f2f2">345,77</text>
<text x="1608.0" y="856.9" font-size="16.2" fill="#f2f2f2">436,96</text>
<rect x="745" y="863.68" width="927.0" height="27.72" fill="#444"/>
<text x="758" y="884.3" font-size="16" fill="#fff" font-weight="bold" textLength="135.5" lengthAdjust="spacingAndGlyphs">Gamma Log/Log</text>
<text x="911.3" y="884.3" font-size="16.2" fill="#f2f2f2">1,28</text>
<text x="989.3" y="884.3" font-size="16.2" fill="#f2f2f2">2,18</text>
<text x="1058.0" y="884.3" font-size="16.2" fill="#f2f2f2">2,19</text>
<text x="1126.8" y="884.3" font-size="16.2" fill="#f2f2f2">2,21</text>
<text x="1195.5" y="884.3" font-size="16.2" fill="#f2f2f2">2,23</text>
<text x="1264.3" y="884.3" font-size="16.2" fill="#f2f2f2">2,23</text>
<text x="1333.0" y="884.3" font-size="16.2" fill="#f2f2f2">2,25</text>
<text x="1401.8" y="884.3" font-size="16.2" fill="#f2f2f2">2,25</text>
<text x="1470.5" y="884.3" font-size="16.2" fill="#f2f2f2">2,25</text>
<text x="1539.3" y="884.3" font-size="16.2" fill="#f2f2f2">2,29</text>
<text x="1608.0" y="884.3" font-size="16.2" fill="#f2f2f2">2,27</text>
<rect x="745" y="891.10" width="927.0" height="27.72" fill="#7c7c7c"/>
<text x="758" y="911.7" font-size="16" fill="#fff" font-weight="bold" textLength="31" lengthAdjust="spacingAndGlyphs">CCT</text>
<text x="911.3" y="911.7" font-size="16.2" fill="#f2f2f2">19605,00</text>
<text x="989.3" y="911.7" font-size="16.2" fill="#f2f2f2">6714,00</text>
<text x="1058.0" y="911.7" font-size="16.2" fill="#f2f2f2">6293,00</text>
<text x="1126.8" y="911.7" font-size="16.2" fill="#f2f2f2">6422,00</text>
<text x="1195.5" y="911.7" font-size="16.2" fill="#f2f2f2">6393,00</text>
<text x="1264.3" y="911.7" font-size="16.2" fill="#f2f2f2">6404,00</text>
<text x="1333.0" y="911.7" font-size="16.2" fill="#f2f2f2">6385,00</text>
<text x="1401.8" y="911.7" font-size="16.2" fill="#f2f2f2">6404,00</text>
<text x="1470.5" y="911.7" font-size="16.2" fill="#f2f2f2">6419,00</text>
<text x="1539.3" y="911.7" font-size="16.2" fill="#f2f2f2">6438,00</text>
<text x="1608.0" y="911.7" font-size="16.2" fill="#f2f2f2">6316,00</text>
<rect x="745" y="918.52" width="927.0" height="27.72" fill="#444"/>
<text x="758" y="939.1" font-size="16" fill="#fff" font-weight="bold" textLength="66" lengthAdjust="spacingAndGlyphs">ΔE 2000</text>
<text x="911.3" y="939.1" font-size="16.2" fill="#f2f2f2">0,86</text>
<text x="989.3" y="939.1" font-size="16.2" fill="#f2f2f2">1,88</text>
<text x="1058.0" y="939.1" font-size="16.2" fill="#f2f2f2">1,44</text>
<text x="1126.8" y="939.1" font-size="16.2" fill="#f2f2f2">1,21</text>
<text x="1195.5" y="939.1" font-size="16.2" fill="#f2f2f2">0,69</text>
<text x="1264.3" y="939.1" font-size="16.2" fill="#f2f2f2">0,64</text>
<text x="1333.0" y="939.1" font-size="16.2" fill="#f2f2f2">0,82</text>
<text x="1401.8" y="939.1" font-size="16.2" fill="#f2f2f2">0,90</text>
<text x="1470.5" y="939.1" font-size="16.2" fill="#f2f2f2">1,08</text>
<text x="1539.3" y="939.1" font-size="16.2" fill="#f2f2f2">0,91</text>
<text x="1608.0" y="939.1" font-size="16.2" fill="#f2f2f2">2,00</text>
</g>
<g id="bottombar">
<rect x="0" y="967" width="1920" height="72" fill="#2c2c2c"/>
<rect x="1.3" y="969" width="139.7" height="69" rx="4" fill="url(#gbtn)"/>
<rect x="7.0" y="974.5" width="128.2" height="40.5" rx="3.5" fill="#000" stroke="url(#inset)" stroke-width="1.2"/>
<text x="71.0" y="1032.8" font-size="11.5" fill="#2e2e2e" font-weight="bold" text-anchor="middle">0</text>
<rect x="143.2" y="969" width="139.7" height="69" rx="4" fill="url(#gbtn)"/>
<rect x="148.9" y="974.5" width="128.2" height="40.5" rx="3.5" fill="#1a1a1a" stroke="url(#inset)" stroke-width="1.2"/>
<text x="212.9" y="1032.8" font-size="11.5" fill="#2e2e2e" font-weight="bold" text-anchor="middle">10</text>
<rect x="285.1" y="969" width="139.7" height="69" rx="4" fill="url(#gbtn)"/>
<rect x="290.8" y="974.5" width="128.2" height="40.5" rx="3.5" fill="#333" stroke="url(#inset)" stroke-width="1.2"/>
<text x="354.8" y="1032.8" font-size="11.5" fill="#2e2e2e" font-weight="bold" text-anchor="middle">20</text>
<rect x="427.0" y="969" width="139.7" height="69" rx="4" fill="url(#gbtn)"/>
<rect x="432.7" y="974.5" width="128.2" height="40.5" rx="3.5" fill="#4d4d4d" stroke="url(#inset)" stroke-width="1.2"/>
<text x="496.7" y="1032.8" font-size="11.5" fill="#2e2e2e" font-weight="bold" text-anchor="middle">30</text>
<rect x="568.9" y="969" width="139.7" height="69" rx="4" fill="url(#gbtn)"/>
<rect x="574.6" y="974.5" width="128.2" height="40.5" rx="3.5" fill="#666" stroke="url(#inset)" stroke-width="1.2"/>
<text x="638.6" y="1032.8" font-size="11.5" fill="#2e2e2e" font-weight="bold" text-anchor="middle">40</text>
<rect x="710.8" y="969" width="139.7" height="69" rx="4" fill="url(#gbtn)"/>
<rect x="716.5" y="974.5" width="128.2" height="40.5" rx="3.5" fill="#808080" stroke="url(#inset)" stroke-width="1.2"/>
<text x="780.5" y="1032.8" font-size="11.5" fill="#2e2e2e" font-weight="bold" text-anchor="middle">50</text>
<rect x="852.7" y="969" width="139.7" height="69" rx="4" fill="url(#gbtn)"/>
<rect x="858.4" y="974.5" width="128.2" height="40.5" rx="3.5" fill="#999" stroke="url(#inset)" stroke-width="1.2"/>
<text x="922.4" y="1032.8" font-size="11.5" fill="#2e2e2e" font-weight="bold" text-anchor="middle">60</text>
<rect x="994.6" y="969" width="139.7" height="69" rx="4" fill="url(#gbtn)"/>
<rect x="1000.3" y="974.5" width="128.2" height="40.5" rx="3.5" fill="#b3b3b3" stroke="url(#inset)" stroke-width="1.2"/>
<text x="1064.3" y="1032.8" font-size="11.5" fill="#2e2e2e" font-weight="bold" text-anchor="middle">70</text>
<rect x="1136.5" y="969" width="139.7" height="69" rx="4" fill="url(#gbtn)"/>
<rect x="1142.2" y="974.5" width="128.2" height="40.5" rx="3.5" fill="#ccc" stroke="url(#inset)" stroke-width="1.2"/>
<text x="1206.2" y="1032.8" font-size="11.5" fill="#2e2e2e" font-weight="bold" text-anchor="middle">80</text>
<rect x="1278.4" y="969" width="139.7" height="69" rx="4" fill="url(#gbtn)"/>
<rect x="1284.1" y="974.5" width="128.2" height="40.5" rx="3.5" fill="#e6e6e6" stroke="url(#inset)" stroke-width="1.2"/>
<text x="1348.1" y="1032.8" font-size="11.5" fill="#2e2e2e" font-weight="bold" text-anchor="middle">90</text>
<rect x="1420.3" y="969" width="139.7" height="69" rx="4" fill="#232323"/>
<rect x="1426.0" y="974.5" width="128.2" height="40.5" rx="3.5" fill="#fff" stroke="url(#inset)" stroke-width="1.2"/>
<text x="1490.0" y="1032.8" font-size="11.5" fill="#fff" font-weight="bold" text-anchor="middle">100</text>
<rect x="1563.5" y="968.7" width="54" height="20.5" rx="3" fill="url(#gbtn2)"/>
<ellipse cx="1590.5" cy="978" rx="9" ry="7" fill="#8a8a8a"/>
<path d="M1585.5,981 L1590.5,975.5 L1595.5,981Z" fill="#2a2a2a"/>
<rect x="1563.5" y="990.4" width="54" height="47" rx="3" fill="url(#sqbtn)"/>
<rect x="1574" y="997.6" width="32.5" height="32" rx="4" fill="#929292" stroke="#1c1c1c" stroke-width="2.4"/>
<rect x="1574" y="1013.6" width="32.5" height="16" fill="#000" opacity="0.12"/>
<rect x="1583" y="1006.6" width="15" height="15" fill="#0a0a0a"/>
<rect x="1619" y="968.7" width="50.3" height="33.5" rx="2" fill="url(#gbtn3)"/>
<circle cx="1644.3" cy="985.5" r="11" fill="url(#gcirc)" opacity="0.9"/>
<rect x="1639.6" y="980.8" width="9.4" height="9.4" fill="#2a2a2a"/>
<rect x="1672" y="968.7" width="50.3" height="33.5" rx="2" fill="url(#gbtn3)"/>
<circle cx="1697.3" cy="985.5" r="11" fill="url(#gcirc)" opacity="0.9"/>
<path d="M1693.3,980 L1702.8,985.5 L1693.3,991Z" fill="#2a2a2a"/>
<rect x="1723" y="968.7" width="50.3" height="33.5" rx="2" fill="url(#gbtn3)"/>
<circle cx="1748.3" cy="985.5" r="11" fill="url(#gcirc)" opacity="0.9"/>
<path d="M1744.8,980 H1741.8 V991 H1744.8 M1751.8,980 H1754.8 V991 H1751.8" fill="none" stroke="#2a2a2a" stroke-width="1.8"/><path d="M1745.8,985.5 H1747.5 M1749.1,985.5 H1750.8" stroke="#2a2a2a" stroke-width="1.6"/>
<rect x="1773.5" y="968.7" width="50.3" height="33.5" rx="2" fill="url(#gbtn3)"/>
<circle cx="1798.8" cy="985.5" r="11" fill="url(#gcirc)" opacity="0.9"/>
<path d="M1798.8,985.5 C1796.3,981.5 1791.8,981.5 1791.8,985.5 C1791.8,989.5 1796.3,989.5 1798.8,985.5 C1801.3,981.5 1805.8,981.5 1805.8,985.5 C1805.8,989.5 1801.3,989.5 1798.8,985.5Z" fill="none" stroke="#2a2a2a" stroke-width="2"/>
<rect x="1824.5" y="968.7" width="50.3" height="33.5" rx="2" fill="url(#gbtn3)"/>
<circle cx="1849.8" cy="985.5" r="11" fill="url(#gcirc)" opacity="0.9"/>
<path d="M1844.3,984 A5.8,5.8 0 0 1 1854.3,981.5 M1855.3,987 A5.8,5.8 0 0 1 1845.3,989.5" fill="none" stroke="#2a2a2a" stroke-width="2.2"/><path d="M1851.8,982.5 L1856.8,979.5 L1856.3,985Z M1847.8,988.5 L1842.8,991.5 L1843.3,986Z" fill="#2a2a2a"/>
<rect x="1875" y="968.7" width="45" height="33.5" fill="#2a2a2a"/>
<circle cx="1899.5" cy="985.5" r="11" fill="#383838"/>
<rect x="1619" y="1004" width="152.6" height="34" rx="2" fill="url(#gbtn3)"/>
<rect x="1773" y="1004" width="150" height="34" rx="2" fill="url(#gbtn3)"/>
<circle cx="1653" cy="1021.3" r="11" fill="url(#gcirc)" opacity="0.9"/>
<circle cx="1895" cy="1021.3" r="11" fill="url(#gcirc)" opacity="0.9"/>
<path d="M1652.5,1016 L1648.5,1021.3 L1652.5,1026.6 M1658,1016 L1654,1021.3 L1658,1026.6" fill="none" stroke="#2e2e2e" stroke-width="1.8"/>
<path d="M1890,1016 L1894,1021.3 L1890,1026.6 M1895.5,1016 L1899.5,1021.3 L1895.5,1026.6" fill="none" stroke="#2e2e2e" stroke-width="1.8"/>
<text x="1684" y="1029.5" font-size="24.5" fill="#2c2c2c" textLength="57" lengthAdjust="spacingAndGlyphs" stroke="#2c2c2c" stroke-width="0.5">Back</text>
<text x="1804.8" y="1029.5" font-size="24.5" fill="#2c2c2c" textLength="57.5" lengthAdjust="spacingAndGlyphs" stroke="#2c2c2c" stroke-width="0.5">Next</text>
</g>
</svg>
</body></html>
